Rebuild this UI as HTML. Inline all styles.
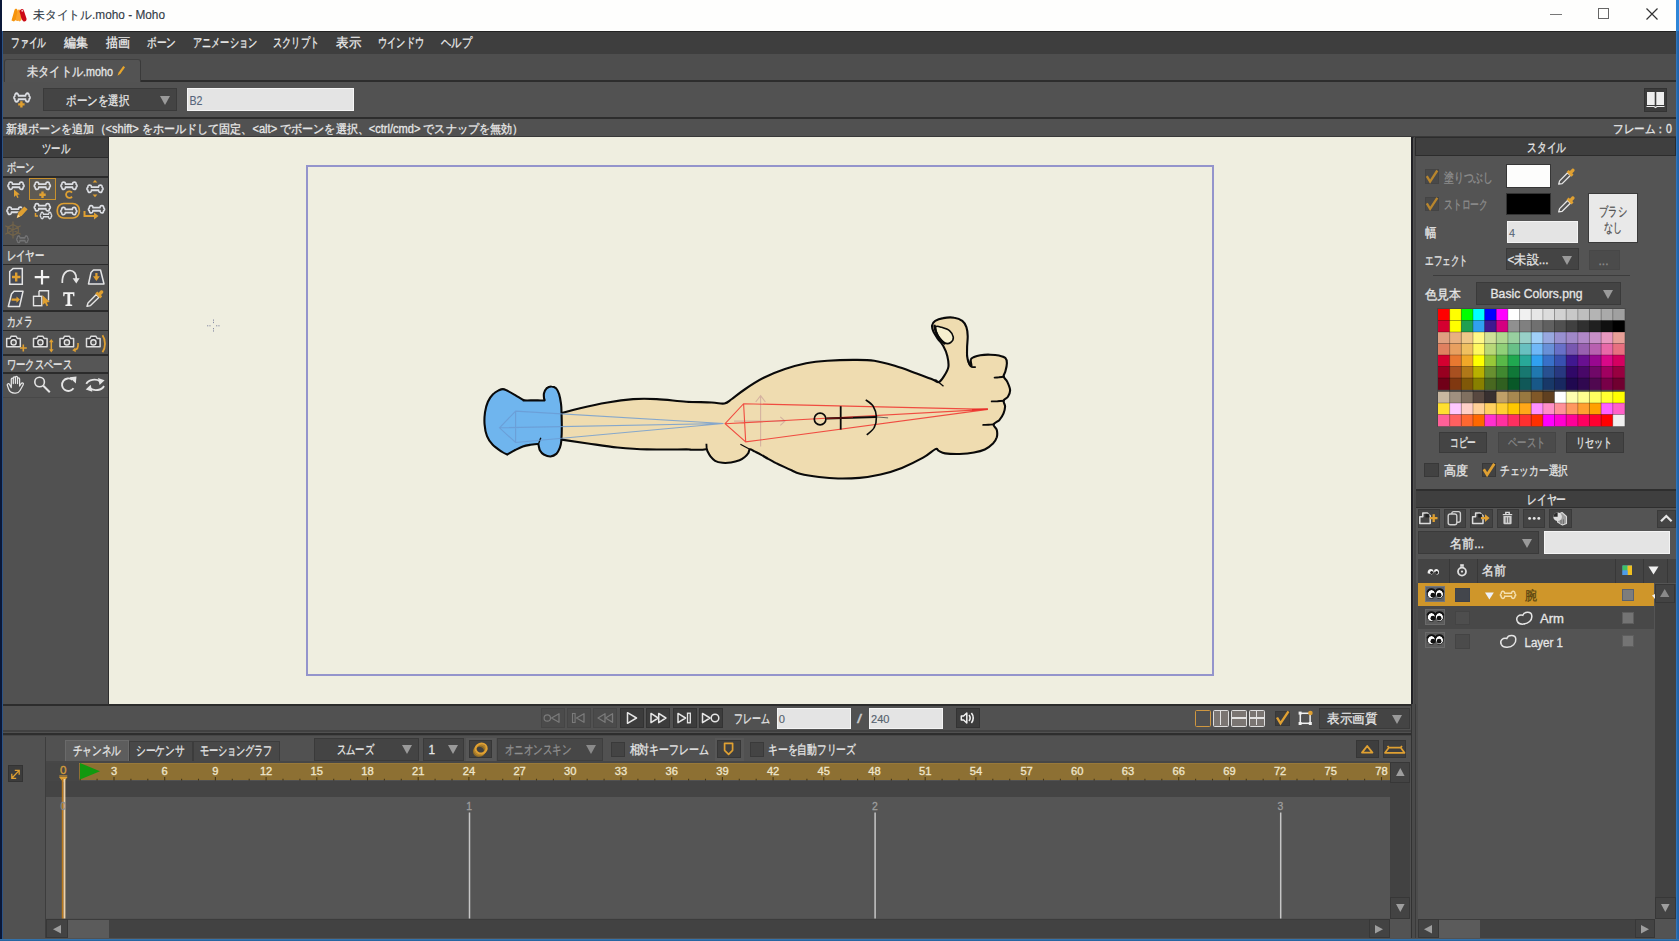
<!DOCTYPE html>
<html lang="ja">
<head>
<meta charset="utf-8">
<title>未タイトル.moho - Moho</title>
<style>
*{box-sizing:border-box;margin:0;padding:0}
html,body{width:1679px;height:941px;overflow:hidden;background:#515151}
body{font-family:"Liberation Sans",sans-serif;font-size:12px;color:#e4e4e4;position:relative}
.a{position:absolute;overflow:hidden}
svg{position:absolute;overflow:visible}
#txt{left:0;top:0;font-family:"Liberation Sans",sans-serif;pointer-events:none}
</style>
</head>
<body>
<svg width="0" height="0" style="position:absolute"><defs>
<g id="bone"><path transform="translate(0.9,0) scale(0.9,1.04)" d="M5,3 L13,3 C12.6,0.2 17.6,0.4 16.9,3.3 C18.4,4 18.4,5.5 16.9,5.8 C17.6,8.7 12.6,8.8 13,6 L5,6 C5.4,8.8 0.4,8.7 1.1,5.8 C-0.4,5.5 -0.4,4 1.1,3.3 C0.4,0.4 5.4,0.2 5,3 Z" fill="none" stroke="#dcdee3" stroke-width="1.75" stroke-linejoin="round"/></g>
</defs></svg>
<div class="a" style="left:0px;top:0px;width:1679px;height:31px;background:#fefefd;"></div>
<svg style="left:10.9px;top:6.6px" width="16" height="16" viewBox="0 0 16 16"><path d="M0.5,13.5 L3.5,3 C4,1.2 6,1.2 6.5,3 L8,9 L7,14 L4.5,13 L3,14.5 Z" fill="#f6940c"/>
<path d="M4.5,13.5 L6.5,4 C7,2 9,2 9.3,4 L10.5,13 L8.5,14.5 L7,13.5 Z" fill="#fba22a"/>
<path d="M8.5,4.5 C9,1.5 12.5,1 13,4 L15.5,11.5 C16,14 13.5,15.5 12,14 L10.5,12 Z" fill="#cc0a16"/>
<circle cx="11.3" cy="3.8" r="1" fill="#f4c0c0"/></svg>
<div class="a" style="left:1550px;top:13.6px;width:12px;height:1.3px;background:#777;"></div>
<div class="a" style="left:1598px;top:8px;width:11px;height:11px;border:1px solid #666;"></div>
<svg style="left:1646px;top:8px" width="12" height="12" viewBox="0 0 12 12"><path d="M0.5,0.5 L11.5,11.5 M11.5,0.5 L0.5,11.5" stroke="#333" stroke-width="1.2" fill="none"/></svg>
<div class="a" style="left:0px;top:31px;width:1679px;height:1px;background:#222;"></div>
<div class="a" style="left:0px;top:32px;width:1679px;height:21.5px;background:#3e3e3e;"></div>
<div class="a" style="left:0px;top:53.5px;width:1679px;height:0.9px;background:#393939;"></div>
<div class="a" style="left:0px;top:54.4px;width:1679px;height:26.6px;background:#4e4e4e;"></div>
<div class="a" style="left:141px;top:80px;width:1538px;height:2px;background:#2d2d2d;"></div>
<div class="a" style="left:4px;top:59.3px;width:137px;height:22.7px;background:#535353;border:1px solid #3a3a3a;border-top-color:#404040;border-bottom:none;border-radius:3px 3px 0 0;"></div>
<svg style="left:116px;top:65px" width="10" height="12" viewBox="0 0 10 12"><path d="M1.5,10.8 L2.6,7.4 L7.3,1 L9,2.2 L4.5,8.8 Z" fill="#e8a62c"/></svg>
<div class="a" style="left:0px;top:82px;width:1679px;height:36px;background:#525252;"></div>
<svg style="left:12px;top:90px" width="22" height="20" viewBox="0 0 22 20"><g transform="translate(1,2.2) scale(1,1.14)"><use href="#bone"/></g><path transform="translate(0,-0.3)" d="M8.2,11.5 h2.4 v2 h2 v2.4 h-2 v2 h-2.4 v-2 h-2 v-2.4 h2 z" fill="#e0a030"/></svg>
<div class="a" style="left:43px;top:88px;width:134px;height:23px;background:#444;border:1px solid #3a3a3a;"></div>
<svg style="left:160px;top:96px" width="10" height="9" viewBox="0 0 10 9"><path d="M0,0 L10,0 L5.0,9 Z" fill="#9a9a9a"/></svg>
<div class="a" style="left:187px;top:88px;width:167px;height:23px;background:#e4e4e4;border:1px solid #f6f6f6;"></div>
<div class="a" style="left:1644px;top:88px;width:23px;height:24px;background:#3c3c3c;border:1px solid #333;"></div>
<svg style="left:1646px;top:91px" width="19" height="18" viewBox="0 0 19 18"><path d="M1,1 L8.7,1 L8.7,14 L1,14 Z M10.3,1 L18,1 L18,14 L10.3,14 Z" fill="#eee"/>
<path d="M0.5,15.5 L8,15.5 L9.5,16.5 L11,15.5 L18.5,15.5" stroke="#eee" stroke-width="1.2" fill="none"/></svg>
<div class="a" style="left:0px;top:117px;width:1679px;height:2px;background:#2d2d2d;"></div>
<div class="a" style="left:0px;top:119px;width:1679px;height:18px;background:#515151;"></div>
<div class="a" style="left:0px;top:136px;width:1679px;height:1.6px;background:#383838;"></div>
<div class="a" style="left:0px;top:138px;width:110px;height:566px;background:#515151;"></div>
<div class="a" style="left:3px;top:138px;width:106px;height:18.5px;background:#3f3f3f;"></div>
<div class="a" style="left:3px;top:156.5px;width:106px;height:1.5px;background:#2b2b2b;"></div>
<div class="a" style="left:3px;top:158px;width:106px;height:18px;background:#565656;"></div>
<div class="a" style="left:3px;top:176px;width:106px;height:1.6px;background:#2b2b2b;"></div>
<div class="a" style="left:29px;top:178px;width:27px;height:22px;background:#5e5a52;border:1.5px solid #c8912e;"></div>
<svg style="left:0px;top:0px" width="110" height="250" viewBox="0 0 110 250"><use href="#bone" x="7" y="181"/><path d="M14,189.5 L14,197 L16,195.3 L17.3,198 L18.6,197.4 L17.3,194.8 L19.8,194.6 Z" fill="#dfa032"/><use href="#bone" x="33.3" y="181"/><path d="M41.3,191.5 h2.4 v2 h2 v2.4 h-2 v2 h-2.4 v-2 h-2 v-2.4 h2 z" fill="#dfa032"/><use href="#bone" x="60" y="181"/><path d="M72,192.6 A3.3,3.3 0 1 0 72,196.6" fill="none" stroke="#dfa032" stroke-width="1.8"/><use href="#bone" x="86" y="184"/><path d="M92.6,182.6 L95,180 L97.4,182.6 Z M92.6,194.6 L95,197.2 L97.4,194.6 Z" fill="#dfa032"/><use href="#bone" x="6" y="206"/><path d="M16.6,218.2 L18.4,212.6 L24.3,206.4 L27.6,209.3 L21.8,215.8 Z" fill="#dfa032" stroke="#515151" stroke-width="1.2" paint-order="stroke"/><path d="M16.9,217.8 L18,214.6 L20,216.6 Z" fill="#f6d9a0"/><use href="#bone" x="33.3" y="202.5"/><g transform="translate(39.5,211.5) scale(0.72,0.85)"><use href="#bone"/></g><path d="M35.5,213 L35.5,216 L38,216" stroke="#dfa032" stroke-width="1.5" fill="none"/><rect x="57.3" y="203.5" width="22" height="14.5" rx="6.5" fill="none" stroke="#dfa032" stroke-width="1.7"/><use href="#bone" x="59.8" y="206.3"/><use href="#bone" x="87.5" y="204.5"/><path d="M84.5,211 L84.5,216 L95,216" stroke="#dfa032" stroke-width="2" fill="none"/><path d="M94,212.6 L98.5,216 L94,219.4 Z" fill="#dfa032"/><g opacity="0.24"><path d="M13,221.5 L13,238.5 M5.3,225.8 L20.7,234.2 M5.3,234.2 L20.7,225.8 M13,224.5 L18.3,227.3 L18.3,232.7 L13,235.5 L7.7,232.7 L7.7,227.3 Z" stroke="#dfa032" stroke-width="1.2" fill="none"/><g transform="translate(16,235) scale(0.72,0.9)"><use href="#bone"/></g></g></svg>
<div class="a" style="left:3px;top:244.5px;width:106px;height:1.6px;background:#2b2b2b;"></div>
<div class="a" style="left:3px;top:246px;width:106px;height:17.5px;background:#565656;"></div>
<div class="a" style="left:3px;top:263.5px;width:106px;height:1.6px;background:#2b2b2b;"></div>
<svg style="left:0px;top:0px" width="110" height="312" viewBox="0 0 110 312"><path d="M9.7,284.3 L9.7,271.5 L13,268.6 L22.3,268.6 L22.3,284.3 Z" fill="#464a54" stroke="#e4e4e4" stroke-width="1.5"/><path d="M15,272.5 h2.4 v3.3 h3 v2.4 h-3 v3.3 h-2.4 v-3.3 h-3 v-2.4 h3 z" fill="#dfa032"/><path d="M42,270 L42,284.5 M34.7,277.2 L49.3,277.2" stroke="#f4f4f4" stroke-width="2.2"/><path d="M62.3,283 C62,274 66,270.5 70,270.5 C74,270.5 76.5,274 76.3,279" fill="none" stroke="#e4e4e4" stroke-width="1.7"/><path d="M72.6,278.3 L79.6,278.3 L76.3,283.6 Z" fill="#e4e4e4"/><path d="M88.5,284 L91,272.5 L93.5,270 L100.5,270 L104,284 Z" fill="#464a54" stroke="#e4e4e4" stroke-width="1.5" stroke-linejoin="round"/><path d="M95.3,273 h2.2 v3.2 h2.3 L96.4,281 L93,276.2 h2.3 z" fill="#dfa032"/><path d="M8.3,306.5 L11.5,294 L14,291.3 L23,291.3 L19.5,306.5 Z" fill="#464a54" stroke="#e4e4e4" stroke-width="1.5" stroke-linejoin="round"/><path d="M11.5,298.5 h5 v-2 L20,299.6 L16.5,302.8 v-2 h-5 z" fill="#dfa032"/><path d="M39,290.8 L48.5,290.8 L48.5,300.5 M39,290.8 L39,296" fill="none" stroke="#e4e4e4" stroke-width="1.4"/><rect x="33.5" y="296.3" width="8.3" height="9.4" fill="none" stroke="#e4e4e4" stroke-width="1.4"/><path d="M42.6,295.3 L42.6,305 L45,303 L46.6,306.3 L48.2,305.5 L46.7,302.4 L49.8,302 Z" fill="#dfa032"/><path d="M63.2,292.3 L74.4,292.3 L74.4,296.2 L73.3,296.2 L72.8,293.9 L70.2,293.9 L70.2,304.3 L72.2,304.8 L72.2,306 L65.4,306 L65.4,304.8 L67.4,304.3 L67.4,293.9 L64.8,293.9 L64.3,296.2 L63.2,296.2 Z" fill="#f2f2f2"/><path d="M87,306.3 L88,303 L96.3,294.5 L99,297.2 L90.5,305.6 Z" fill="none" stroke="#e4e4e4" stroke-width="1.4" stroke-linejoin="round"/><path d="M95.3,293.6 L97.3,291.6 L98.6,292.8 L100.6,290.6 C102,289.3 104.3,291.4 103,293 L101,295 L102.2,296.4 L100.2,298.4 Z" fill="#dfa032"/></svg>
<div class="a" style="left:3px;top:310px;width:106px;height:1.6px;background:#2b2b2b;"></div>
<div class="a" style="left:3px;top:311.6px;width:106px;height:18px;background:#565656;"></div>
<div class="a" style="left:3px;top:329.5px;width:106px;height:1.6px;background:#2b2b2b;"></div>
<svg style="left:0px;top:0px" width="110" height="356" viewBox="0 0 110 356"><g transform="translate(6,335.4)"><path d="M0.7,3 L4,3 L5.3,0.8 L10,0.8 L11.3,3 L14.3,3 L14.3,11.3 L0.7,11.3 Z" fill="#3a3a3c" stroke="#dedede" stroke-width="1.5" stroke-linejoin="round"/><circle cx="7.6" cy="7" r="2.6" fill="#555" stroke="#e4e4e4" stroke-width="1.4"/></g><path d="M23.3,344.6 L23.3,351.4 M20,348 L26.8,348" stroke="#dfa032" stroke-width="1.6"/><g transform="translate(32.8,335.4)"><path d="M0.7,3 L4,3 L5.3,0.8 L10,0.8 L11.3,3 L14.3,3 L14.3,11.3 L0.7,11.3 Z" fill="#3a3a3c" stroke="#dedede" stroke-width="1.5" stroke-linejoin="round"/><circle cx="7.6" cy="7" r="2.6" fill="#555" stroke="#e4e4e4" stroke-width="1.4"/></g><path d="M51.3,341 L51.3,350.5" stroke="#dfa032" stroke-width="1.5"/><path d="M49,342.3 L51.3,339 L53.6,342.3 Z M49,349.3 L51.3,352.6 L53.6,349.3 Z" fill="#dfa032"/><g transform="translate(59.3,335.4)"><path d="M0.7,3 L4,3 L5.3,0.8 L10,0.8 L11.3,3 L14.3,3 L14.3,11.3 L0.7,11.3 Z" fill="#3a3a3c" stroke="#dedede" stroke-width="1.5" stroke-linejoin="round"/><circle cx="7.6" cy="7" r="2.6" fill="#555" stroke="#e4e4e4" stroke-width="1.4"/></g><path d="M78,343 C78.6,347.5 77,349.6 74.5,350" fill="none" stroke="#dfa032" stroke-width="1.6"/><path d="M75.3,347.4 L72.3,350.3 L75.8,352.3 Z" fill="#dfa032"/><g transform="translate(85.8,335.4)"><path d="M0.7,3 L4,3 L5.3,0.8 L10,0.8 L11.3,3 L14.3,3 L14.3,11.3 L0.7,11.3 Z" fill="#3a3a3c" stroke="#dedede" stroke-width="1.5" stroke-linejoin="round"/><circle cx="7.6" cy="7" r="2.6" fill="#555" stroke="#e4e4e4" stroke-width="1.4"/></g><path d="M102.5,335.3 C105.8,340 105.8,347.5 102.5,352.3" fill="none" stroke="#dfa032" stroke-width="1.8"/></svg>
<div class="a" style="left:3px;top:354px;width:106px;height:1.7px;background:#2b2b2b;"></div>
<div class="a" style="left:3px;top:355.7px;width:106px;height:16.6px;background:#565656;"></div>
<div class="a" style="left:3px;top:372.3px;width:106px;height:1.7px;background:#2b2b2b;"></div>
<svg style="left:0px;top:-0.7px" width="110" height="400" viewBox="0 0 110 400"><path d="M11.3,386 L11.3,380.3 C11.3,378.8 13.3,378.8 13.3,380.3 L13.3,384.5 L13.3,379 C13.3,377.5 15.4,377.5 15.4,379 L15.4,384.3 L15.4,378.6 C15.4,377.1 17.5,377.1 17.5,378.6 L17.5,384.5 L17.5,380 C17.5,378.5 19.6,378.5 19.6,380 L19.6,387 L21.3,384.5 C22.3,383.3 24,384.3 23.2,385.7 L20,391.5 C19,393.3 17.6,394 15.8,394 L14.3,394 C11.6,394 9.4,392.3 8.6,390 L7.3,386.3 C6.8,384.8 8.8,384 9.5,385.4 L11.3,388.6 Z" fill="none" stroke="#e4e4e4" stroke-width="1.25" stroke-linejoin="round"/><circle cx="39.6" cy="383" r="4.8" fill="none" stroke="#e4e4e4" stroke-width="1.6"/><path d="M43.3,386.8 L49.8,393.3" stroke="#e4e4e4" stroke-width="2"/><path d="M73.5,389.3 A6.3,6.3 0 1 1 72.3,380.8" fill="none" stroke="#e4e4e4" stroke-width="1.9"/><path d="M69.5,378.3 L76.5,377.5 L75.8,384.5 Z" fill="#e4e4e4"/><path d="M86.3,384.8 C88.5,380.3 96,379.5 100,382.3" fill="none" stroke="#e4e4e4" stroke-width="1.8"/><path d="M98,379 L104.6,381.3 L99.6,386 Z" fill="#e4e4e4"/><path d="M104,387 C101.8,391.5 94.3,392.3 90.3,389.5" fill="none" stroke="#e4e4e4" stroke-width="1.8"/><path d="M92.3,392.8 L85.7,390.5 L90.7,385.8 Z" fill="#e4e4e4"/></svg>
<div class="a" style="left:3px;top:397px;width:106px;height:1px;background:#484848;"></div>
<div class="a" style="left:107.8px;top:137px;width:2px;height:567px;background:#2e2e2e;"></div>
<div class="a" style="left:109.2px;top:137px;width:1301.6px;height:567px;background:#efeee0;"></div>
<div class="a" style="left:306.3px;top:165px;width:907.3px;height:510.7px;border:2.8px solid #9494cc;"></div>
<svg style="left:0px;top:0px" width="1679" height="941" viewBox="0 0 1679 941"><path d="M544.7,417.6 C548.8,413.8 555.7,414.6 561.6,413.1 C567.5,411.5 572.4,409.9 580.1,408.2 C587.7,406.4 598.7,404.0 607.6,402.5 C616.4,400.9 624.9,399.7 633.1,399.1 C641.3,398.6 647.9,398.7 656.7,399.1 C665.6,399.5 677.0,401.1 686.2,401.7 C695.4,402.2 705.4,402.1 711.7,402.5 C718.1,402.8 721.1,404.1 724.4,403.5 C727.8,402.9 728.5,401.4 731.9,399.0 C735.2,396.7 739.3,393.0 744.6,389.5 C749.9,385.9 757.0,381.2 763.7,377.8 C770.5,374.4 777.9,371.5 785.0,369.1 C792.1,366.7 799.2,364.7 806.2,363.3 C813.3,361.9 819.7,361.3 827.5,360.8 C835.3,360.2 845.2,359.9 853.0,359.9 C860.8,359.9 867.2,359.7 874.2,360.8 C881.3,361.8 888.4,364.0 895.5,366.1 C902.6,368.2 910.5,371.3 916.7,373.5 C922.9,375.8 929.0,378.0 932.7,379.5 C936.4,380.9 936.9,382.7 938.8,382.1 C940.7,381.5 942.6,378.4 944.2,375.8 C945.8,373.3 947.9,370.1 948.4,366.8 C948.9,363.5 948.1,359.4 947.3,356.0 C946.5,352.5 944.9,348.9 943.3,346.0 C941.8,343.2 939.6,341.2 937.9,338.8 C936.3,336.4 934.4,333.8 933.4,331.6 C932.4,329.3 931.8,327.1 932.1,325.3 C932.4,323.5 933.3,322.0 935.2,320.8 C937.1,319.6 940.2,318.6 943.3,318.1 C946.5,317.5 951.0,317.2 954.2,317.7 C957.3,318.1 960.2,319.2 962.3,320.8 C964.3,322.3 965.5,324.5 966.4,327.1 C967.3,329.6 967.6,332.8 967.7,336.1 C967.8,339.4 967.2,343.6 967.1,346.9 C967.1,350.2 966.9,353.4 967.1,356.0 C967.4,358.5 967.9,360.6 968.6,362.3 C969.3,364.0 971.1,366.5 971.5,366.1 C971.8,365.6 970.3,361.1 970.8,359.6 C971.2,358.1 972.4,357.8 974.0,357.0 C975.6,356.3 977.6,355.6 980.3,355.2 C983.0,354.8 987.2,354.6 990.3,354.7 C993.4,354.8 996.4,355.0 998.9,355.6 C1001.4,356.2 1004.1,356.9 1005.4,358.1 C1006.7,359.4 1006.9,361.0 1006.9,363.2 C1006.9,365.4 1006.0,369.1 1005.4,371.3 C1004.9,373.5 1003.3,374.8 1003.6,376.5 C1003.9,378.2 1006.1,379.3 1007.2,381.6 C1008.3,383.9 1010.0,387.7 1010.1,390.3 C1010.2,392.8 1009.0,395.0 1007.9,396.8 C1006.9,398.5 1004.1,399.1 1003.6,400.7 C1003.1,402.3 1005.1,404.3 1005.1,406.5 C1005.0,408.7 1004.4,411.5 1003.4,413.7 C1002.5,415.9 1001.1,418.1 999.5,419.9 C997.8,421.6 994.0,422.7 993.5,424.4 C993.1,426.1 996.2,427.8 996.8,430.0 C997.3,432.1 997.4,434.9 996.8,437.2 C996.1,439.4 994.9,441.5 993.0,443.5 C991.0,445.5 988.0,448.0 984.8,449.5 C981.7,451.0 978.2,451.8 974.0,452.5 C969.8,453.3 964.4,453.8 959.6,454.0 C954.8,454.1 948.6,453.9 945.1,453.4 C941.7,452.9 940.4,451.6 938.8,450.9 C937.2,450.2 938.0,448.0 935.4,449.1 C932.8,450.2 928.7,454.5 923.1,457.7 C917.5,460.8 909.0,465.1 901.9,467.9 C894.8,470.7 887.7,472.8 880.6,474.5 C873.5,476.1 866.5,477.2 859.4,477.9 C852.3,478.5 844.9,478.6 838.1,478.5 C831.4,478.4 825.4,477.8 819.0,477.0 C812.6,476.2 804.5,474.8 800.0,473.7 C795.4,472.6 794.2,471.5 791.6,470.3 C788.9,469.2 786.8,468.2 784.1,466.9 C781.5,465.7 778.3,464.2 775.6,462.9 C773.0,461.5 770.7,460.2 768.2,458.9 C765.7,457.5 763.1,455.8 760.8,454.6 C758.5,453.4 756.2,452.3 754.4,451.4 C752.6,450.5 751.0,449.0 749.9,449.3 C748.9,449.6 749.1,452.0 748.2,453.3 C747.4,454.6 746.3,455.9 744.8,457.0 C743.4,458.2 741.8,459.4 739.5,460.3 C737.2,461.2 733.8,462.1 731.0,462.5 C728.2,462.9 725.2,463.1 722.5,462.8 C719.9,462.5 717.1,461.9 715.1,460.8 C713.0,459.6 711.6,457.7 710.3,456.1 C709.0,454.5 708.0,452.1 707.4,451.0 C706.8,449.9 707.6,449.5 706.6,449.3 C705.5,449.1 703.9,449.6 701.3,449.7 C698.6,449.8 693.1,449.8 690.6,449.7 C688.1,449.7 693.5,449.5 686.2,449.4 C678.9,449.4 658.4,449.8 646.9,449.4 C635.4,449.1 627.2,448.4 617.4,447.5 C607.6,446.5 597.2,444.8 587.9,443.5 C578.6,442.2 570.1,440.9 561.6,439.6 C553.1,438.3 539.6,439.5 536.8,435.9 C534.0,432.2 540.6,421.4 544.7,417.6 Z" fill="#efdcb0" stroke="#0a0a0a" stroke-width="2.1" stroke-linejoin="round"/><path d="M561.5,412.3 C561.4,408.5 561.4,406.7 561.0,403.7 C560.6,400.7 559.9,396.6 559.1,394.1 C558.3,391.6 557.5,389.9 556.3,388.6 C555.0,387.3 553.1,386.5 551.5,386.5 C549.9,386.4 547.8,387.3 546.5,388.4 C545.3,389.5 544.4,391.6 544.0,393.2 C543.6,394.8 543.9,396.8 544.0,397.9 C544.1,399.1 544.7,399.6 544.6,400.0 C544.5,400.5 545.1,400.4 543.4,400.4 C541.6,400.5 537.5,400.4 534.3,400.4 C531.1,400.4 526.1,400.5 524.2,400.4 C522.4,400.4 524.8,400.9 523.3,400.0 C521.8,399.2 517.9,396.7 515.2,395.1 C512.4,393.5 508.6,391.3 506.5,390.3 C504.5,389.3 504.2,389.1 502.9,389.1 C501.6,389.1 500.5,389.5 498.9,390.3 C497.3,391.1 495.0,392.2 493.2,394.1 C491.3,396.0 489.3,398.7 487.9,401.8 C486.6,404.8 485.6,408.5 485.0,412.3 C484.5,416.1 484.2,420.7 484.6,424.7 C484.9,428.7 485.6,432.8 487.0,436.2 C488.3,439.5 490.1,442.2 492.7,444.8 C495.2,447.4 499.9,450.4 502.2,452.0 C504.6,453.6 506.1,454.0 507.0,454.3 C508.0,454.7 506.6,454.7 508.0,454.0 C509.3,453.3 512.7,451.3 515.2,450.0 C517.6,448.8 520.3,447.4 522.8,446.5 C525.4,445.6 528.0,445.2 530.4,444.8 C532.9,444.4 536.3,443.9 537.6,444.0 C539.0,444.1 538.2,444.2 538.6,445.3 C539.0,446.4 539.1,449.0 540.0,450.5 C540.9,452.1 542.1,453.6 543.8,454.5 C545.6,455.5 548.5,456.6 550.5,456.5 C552.6,456.3 554.7,455.3 556.3,453.9 C557.8,452.4 559.1,449.8 559.9,447.7 C560.7,445.5 561.0,444.5 561.3,441.0 C561.6,437.5 561.8,431.4 561.8,426.6 C561.8,421.8 561.6,416.1 561.5,412.3 Z" fill="#6fb5ee" stroke="#0a0a0a" stroke-width="2.1" stroke-linejoin="round"/><path d="M935.9,326.6 C936.7,325.8 938.9,326.5 941.2,327.2 C943.5,327.9 947.7,329.1 949.7,330.8 C951.7,332.5 953.1,335.2 953.3,337.2 C953.5,339.1 952.2,341.5 950.7,342.5 C949.3,343.5 946.6,343.8 944.8,343.1 C943.0,342.4 941.1,340.1 939.7,338.2 C938.3,336.4 936.9,333.8 936.3,331.9 C935.7,329.9 935.1,327.3 935.9,326.6 Z" fill="#f6f0cf" stroke="#0a0a0a" stroke-width="1.6"/><path d="M934.6,325.9 C934.8,326.9 935.1,329.8 935.9,331.9 C936.6,333.9 937.9,336.3 939.3,338.2 C940.7,340.2 943.5,342.5 944.4,343.3" fill="none" stroke="#0a0a0a" stroke-width="2.6" stroke-linecap="round"/><path d="M935.4,379.5 L943.5,386.3" stroke="#0a0a0a" stroke-width="1.3"/><path d="M740.4,444.2 L749.7,449.3" stroke="#0a0a0a" stroke-width="1.3"/><path d="M540.8,437.8 L538.5,444.0" stroke="#0a0a0a" stroke-width="1.3"/><path d="M1004.0,376.5 C1003.1,376.7 1000.5,377.1 998.9,377.3 C997.4,377.4 995.3,377.6 994.6,377.6" fill="none" stroke="#0a0a0a" stroke-width="1.9" stroke-linecap="round"/><path d="M1004.0,400.7 C1002.9,400.8 999.5,401.1 997.5,401.3 C995.4,401.4 992.7,401.4 991.7,401.4" fill="none" stroke="#0a0a0a" stroke-width="1.9" stroke-linecap="round"/><path d="M993.9,424.4 C993.0,424.4 990.2,424.6 988.4,424.7 C986.7,424.8 984.1,424.9 983.2,424.9" fill="none" stroke="#0a0a0a" stroke-width="1.9" stroke-linecap="round"/><path d="M968.2,360.5 C968.5,361.2 969.1,363.9 969.7,365.0 C970.3,366.0 970.9,366.4 971.8,366.8 C972.7,367.1 974.5,367.1 975.1,367.1" fill="none" stroke="#0a0a0a" stroke-width="1.9" stroke-linecap="round"/><path d="M706.4,443.8 L706.7,449.3" stroke="#0a0a0a" stroke-width="1.8"/><path d="M499.5,427.8 L515.6,411.1 L723.5,423.5 L515.6,442.5 Z M515.6,411.1 L515.6,442.5 M499.5,427.8 L723.5,423.5" fill="none" stroke="#6a9ad2" stroke-width="1.1" opacity="0.8"/><path d="M760.6,446.6 L760.6,395.6 M755.7,402.0 L760.6,395.6 L765.4,402.0 M734.0,421.1 L785.0,421.1 M780.3,416.9 L785.0,421.1 L780.3,425.4" fill="none" stroke="#d0a79c" stroke-width="1.1" opacity="0.8"/><path d="M725.1,423.7 L743.6,403.7 L987.9,409.4 L745.7,441.9 Z M743.6,403.7 L745.7,441.9 M725.1,423.7 L987.9,409.4" fill="none" stroke="#f03c34" stroke-width="1.1" opacity="0.9"/><path d="M972.0,409.9 L987.9,409.0" stroke="#e8302a" stroke-width="1.6"/><circle cx="820.1" cy="419.0" r="5.8" fill="none" stroke="#0a0a0a" stroke-width="1.7"/><path d="M826.4,418.6 L876.4,416.9" stroke="#0a0a0a" stroke-width="2"/><path d="M876.4,416.9 L888.1,417.9" stroke="#444" stroke-width="0.8"/><path d="M840.7,406.2 L840.7,429.6" stroke="#0a0a0a" stroke-width="1.8"/><path d="M865.7,399.9 C867.0,400.9 871.4,403.4 873.2,406.2 C875.0,409.1 876.2,413.3 876.4,416.9 C876.5,420.4 875.8,424.5 874.2,427.5 C872.7,430.5 868.0,433.7 866.8,434.9" fill="none" stroke="#0a0a0a" stroke-width="1.6"/><path d="M826.4,418.6 L853.0,417.5" stroke="#d01818" stroke-width="0.8" opacity="0.7"/><path d="M213.5,319.5 v4 M213.5,328 v4 M207,325.8 h4 M216,325.8 h4" stroke="#8a8fa6" stroke-width="1" stroke-dasharray="1.3 1"/></svg>
<div class="a" style="left:0px;top:703.5px;width:1411px;height:2.2px;background:#2c2c2c;"></div>
<div class="a" style="left:0px;top:705.7px;width:1411px;height:27px;background:#515151;"></div>
<div class="a" style="left:0px;top:730.3px;width:1411px;height:2.2px;background:#414141;"></div>
<div class="a" style="left:0px;top:732.5px;width:1411px;height:2.7px;background:#2e2e2e;"></div>
<div class="a" style="left:0px;top:735.2px;width:1411px;height:1.3px;background:#464646;"></div>
<div class="a" style="left:540.5px;top:708px;width:24px;height:20px;background:#4b4b4b;border:1px solid #454545;"></div>
<div class="a" style="left:567px;top:708px;width:24px;height:20px;background:#4b4b4b;border:1px solid #454545;"></div>
<div class="a" style="left:593.4px;top:708px;width:24px;height:20px;background:#4b4b4b;border:1px solid #454545;"></div>
<div class="a" style="left:619.8px;top:708px;width:24px;height:20px;background:#3c3c3c;border:1px solid #333;"></div>
<div class="a" style="left:646.2px;top:708px;width:24px;height:20px;background:#3c3c3c;border:1px solid #333;"></div>
<div class="a" style="left:672.6px;top:708px;width:24px;height:20px;background:#3c3c3c;border:1px solid #333;"></div>
<div class="a" style="left:699px;top:708px;width:24px;height:20px;background:#3c3c3c;border:1px solid #333;"></div>
<div class="a" style="left:955.5px;top:708px;width:24px;height:20px;background:#3c3c3c;border:1px solid #333;"></div>
<div class="a" style="left:777px;top:708px;width:74px;height:21px;background:#e4e4e4;border:1px solid #f4f4f4;"></div>
<div class="a" style="left:869px;top:708px;width:74px;height:21px;background:#e4e4e4;border:1px solid #f4f4f4;"></div>
<div class="a" style="left:1194.5px;top:709.5px;width:16.5px;height:17px;background:#4f4f50;border:1.8px solid #cf9740;border-radius:1.5px;"></div>
<div class="a" style="left:1212.5px;top:709.5px;width:16.5px;height:17px;background:#7a7572;border:1.7px solid #dedede;border-radius:1.5px;"></div>
<div class="a" style="left:1220px;top:711px;width:1.4px;height:14px;background:#e2e2e2;"></div>
<div class="a" style="left:1230.5px;top:709.5px;width:16.5px;height:17px;background:#7a7572;border:1.7px solid #dedede;border-radius:1.5px;"></div>
<div class="a" style="left:1232px;top:717.3px;width:14px;height:1.4px;background:#e2e2e2;"></div>
<div class="a" style="left:1248.5px;top:709.5px;width:16.5px;height:17px;background:#7a7572;border:1.7px solid #dedede;border-radius:1.5px;"></div>
<div class="a" style="left:1256px;top:711px;width:1.4px;height:14px;background:#e2e2e2;"></div>
<div class="a" style="left:1250px;top:717.3px;width:14px;height:1.4px;background:#e2e2e2;"></div>
<div class="a" style="left:1275px;top:710.5px;width:15px;height:15px;background:#3e3e3e;border:1px solid #383838;"></div>
<svg style="left:0px;top:0px" width="1411" height="740" viewBox="0 0 1411 740"><circle cx="547.3" cy="718" r="3.2" fill="none" stroke="#7a7a7a" stroke-width="1.2"/><path d="M559.0,713.7 L551.5,718.0 L559.0,722.3000000000001 Z" fill="none" stroke="#7a7a7a" stroke-width="1.3" stroke-linejoin="round"/><rect x="572.5" y="713.5" width="2.6" height="9" fill="none" stroke="#7a7a7a" stroke-width="1.1"/><path d="M584.0,713.7 L576.5,718.0 L584.0,722.3000000000001 Z" fill="none" stroke="#7a7a7a" stroke-width="1.3" stroke-linejoin="round"/><path d="M605,713.7 L598,718.0 L605,722.3000000000001 Z" fill="none" stroke="#7a7a7a" stroke-width="1.3" stroke-linejoin="round"/><path d="M612.5,713.7 L605.5,718.0 L612.5,722.3000000000001 Z" fill="none" stroke="#7a7a7a" stroke-width="1.3" stroke-linejoin="round"/><path d="M627.5,712.7 L636.5,718.0 L627.5,723.3000000000001 Z" fill="none" stroke="#e6e6e6" stroke-width="1.5" stroke-linejoin="round"/><path d="M651,713.4 L658.2,718.0 L651,722.6 Z" fill="none" stroke="#e6e6e6" stroke-width="1.5" stroke-linejoin="round"/><path d="M658.7,713.4 L665.9000000000001,718.0 L658.7,722.6 Z" fill="none" stroke="#e6e6e6" stroke-width="1.5" stroke-linejoin="round"/><path d="M678,713.4 L685.5,718.0 L678,722.6 Z" fill="none" stroke="#e6e6e6" stroke-width="1.5" stroke-linejoin="round"/><rect x="687.5" y="713.2" width="2.8" height="9.6" fill="none" stroke="#e6e6e6" stroke-width="1.3"/><path d="M702.5,713.4 L710.0,718.0 L702.5,722.6 Z" fill="none" stroke="#e6e6e6" stroke-width="1.5" stroke-linejoin="round"/><circle cx="715" cy="718" r="3.8" fill="none" stroke="#e6e6e6" stroke-width="1.5"/><path d="M961.3,716 L963.6,716 L966.8,713 L966.8,723 L963.6,720 L961.3,720 Z" fill="none" stroke="#f0f0f0" stroke-width="1.5" stroke-linejoin="round"/><path d="M969,715 C970.4,716.8 970.4,719.2 969,721 M971.4,713 C973.8,715.8 973.8,720.2 971.4,723" fill="none" stroke="#f0f0f0" stroke-width="1.6"/><path d="M1277,717.5 L1280.5,723.3 L1288.5,711.3" fill="none" stroke="#dfa032" stroke-width="2.4"/><rect x="1300.3" y="713.3" width="9.8" height="10" fill="none" stroke="#f0f0f0" stroke-width="1.5"/><rect x="1298.6" y="711.6" width="3" height="3" fill="#f0f0f0"/><rect x="1298.6" y="722" width="3" height="3" fill="#f0f0f0"/><rect x="1308.8" y="722" width="3" height="3" fill="#f0f0f0"/><circle cx="1310.4" cy="713" r="2.3" fill="#dfa032"/></svg>
<div class="a" style="left:1318.5px;top:708px;width:91px;height:21px;background:#444;border:1px solid #3a3a3a;"></div>
<svg style="left:1392px;top:715px" width="10" height="9" viewBox="0 0 10 9"><path d="M0,0 L10,0 L5.0,9 Z" fill="#9a9a9a"/></svg>
<div class="a" style="left:0px;top:735.5px;width:1411px;height:203px;background:#515151;"></div>
<div class="a" style="left:44.8px;top:736.5px;width:1.6px;height:201.5px;background:#3d3d3d;"></div>
<div class="a" style="left:65px;top:740px;width:64px;height:22px;background:#5d5d5d;border:1px solid #6a6a6a;border-bottom:none;"></div>
<div class="a" style="left:129px;top:741px;width:63.5px;height:21px;background:#484848;border:1px solid #3c3c3c;border-bottom:none;"></div>
<div class="a" style="left:192.5px;top:741px;width:87px;height:21px;background:#484848;border:1px solid #3c3c3c;border-bottom:none;"></div>
<div class="a" style="left:314px;top:738px;width:105px;height:22.5px;background:#444;border:1px solid #3a3a3a;"></div>
<svg style="left:402px;top:745px" width="10" height="9" viewBox="0 0 10 9"><path d="M0,0 L10,0 L5.0,9 Z" fill="#9a9a9a"/></svg>
<div class="a" style="left:423px;top:738px;width:41px;height:22.5px;background:#444;border:1px solid #3a3a3a;"></div>
<svg style="left:447.5px;top:745px" width="10" height="9" viewBox="0 0 10 9"><path d="M0,0 L10,0 L5.0,9 Z" fill="#9a9a9a"/></svg>
<div class="a" style="left:465.5px;top:737.5px;width:30px;height:23px;background:#575757;"></div>
<div class="a" style="left:468.8px;top:739.5px;width:23px;height:18.5px;background:#404040;border:1px solid #363636;"></div>
<svg style="left:468.5px;top:738px" width="24" height="23" viewBox="0 0 24 23"><g transform="rotate(-20 12 11)"><ellipse cx="9.6" cy="12.4" rx="5.6" ry="5" fill="none" stroke="#8f6c26" stroke-width="1.6"/><ellipse cx="10.8" cy="11.6" rx="5.6" ry="5" fill="none" stroke="#b5842c" stroke-width="1.6"/><ellipse cx="12.3" cy="10.6" rx="5.6" ry="5" fill="none" stroke="#dfa032" stroke-width="2"/></g></svg>
<div class="a" style="left:497px;top:738px;width:105.5px;height:22.5px;background:#474747;border:1px solid #3e3e3e;"></div>
<svg style="left:586px;top:745px" width="10" height="9" viewBox="0 0 10 9"><path d="M0,0 L10,0 L5.0,9 Z" fill="#8a8a8a"/></svg>
<div class="a" style="left:610.5px;top:742px;width:14.5px;height:14.5px;background:#444;border:1px solid #3a3a3a;"></div>
<div class="a" style="left:714.5px;top:737.5px;width:29px;height:23px;background:#575757;"></div>
<div class="a" style="left:717px;top:739.5px;width:23.5px;height:18.8px;background:#404040;border:1px solid #363636;"></div>
<svg style="left:717px;top:738px" width="24" height="23" viewBox="0 0 24 23"><path d="M7.6,5.3 L15.6,5.3 L15.6,12.3 L11.6,16.3 L7.6,12.3 Z" fill="none" stroke="#dfa032" stroke-width="1.7" stroke-linejoin="round"/></svg>
<div class="a" style="left:749.5px;top:742px;width:14.5px;height:14.5px;background:#444;border:1px solid #3a3a3a;"></div>
<div class="a" style="left:1356px;top:740px;width:22.5px;height:18px;background:#3e3e3e;border:1px solid #363636;"></div>
<div class="a" style="left:1383px;top:740px;width:23px;height:18px;background:#3e3e3e;border:1px solid #363636;"></div>
<svg style="left:1356px;top:740px" width="51" height="18" viewBox="0 0 51 18"><path d="M6,12.6 L11.2,6 L16.4,12.6 Z" fill="none" stroke="#dfa032" stroke-width="1.9" stroke-linejoin="round"/><path d="M29,12.8 L33,7.6 L44.6,7.6 L48.5,12.8 Z M31.5,6 L33,7.6 M46,6 L44.6,7.6" fill="none" stroke="#dfa032" stroke-width="1.7" stroke-linejoin="round"/></svg>
<div class="a" style="left:8.3px;top:765px;width:14.8px;height:16.6px;background:#3c3c3c;border:1px solid #333;"></div>
<svg style="left:8.2px;top:765.5px" width="15" height="16" viewBox="0 0 15 16"><path d="M4,12 L11,4.6 M6.8,4.3 L11.2,4.3 L11.2,8.8 M3.8,7.8 L3.8,12.3 L8.2,12.3" fill="none" stroke="#dfa032" stroke-width="1.3"/></svg>
<div class="a" style="left:46px;top:761px;width:1343.5px;height:2px;background:#474747;"></div>
<div class="a" style="left:46px;top:762.6px;width:33px;height:18px;background:#464646;"></div>
<div class="a" style="left:79px;top:762.8px;width:1310.5px;height:17.7px;background:#8d7033;border-top:1px solid #98793a;"></div>
<div class="a" style="left:46px;top:780.5px;width:1343.5px;height:17px;background:#444444;"></div>
<div class="a" style="left:46px;top:797.4px;width:1343.5px;height:121.1px;background:#555555;"></div>
<svg style="left:0px;top:0px" width="1411" height="941" viewBox="0 0 1411 941"><path d="M80.2,778.7 v1.8 M97.1,778.7 v1.8 M114.0,777.1 v3.4 M130.9,778.7 v1.8 M147.8,778.7 v1.8 M164.7,777.1 v3.4 M181.6,778.7 v1.8 M198.5,778.7 v1.8 M215.4,777.1 v3.4 M232.3,778.7 v1.8 M249.2,778.7 v1.8 M266.1,777.1 v3.4 M283.0,778.7 v1.8 M299.9,778.7 v1.8 M316.8,777.1 v3.4 M333.7,778.7 v1.8 M350.6,778.7 v1.8 M367.5,777.1 v3.4 M384.4,778.7 v1.8 M401.3,778.7 v1.8 M418.2,777.1 v3.4 M435.1,778.7 v1.8 M452.0,778.7 v1.8 M468.9,777.1 v3.4 M485.8,778.7 v1.8 M502.7,778.7 v1.8 M519.6,777.1 v3.4 M536.5,778.7 v1.8 M553.4,778.7 v1.8 M570.3,777.1 v3.4 M587.2,778.7 v1.8 M604.1,778.7 v1.8 M621.0,777.1 v3.4 M637.9,778.7 v1.8 M654.8,778.7 v1.8 M671.7,777.1 v3.4 M688.6,778.7 v1.8 M705.5,778.7 v1.8 M722.4,777.1 v3.4 M739.3,778.7 v1.8 M756.2,778.7 v1.8 M773.1,777.1 v3.4 M790.0,778.7 v1.8 M806.9,778.7 v1.8 M823.8,777.1 v3.4 M840.7,778.7 v1.8 M857.6,778.7 v1.8 M874.5,777.1 v3.4 M891.4,778.7 v1.8 M908.3,778.7 v1.8 M925.2,777.1 v3.4 M942.1,778.7 v1.8 M959.0,778.7 v1.8 M975.9,777.1 v3.4 M992.8,778.7 v1.8 M1009.7,778.7 v1.8 M1026.6,777.1 v3.4 M1043.5,778.7 v1.8 M1060.4,778.7 v1.8 M1077.3,777.1 v3.4 M1094.2,778.7 v1.8 M1111.1,778.7 v1.8 M1128.0,777.1 v3.4 M1144.9,778.7 v1.8 M1161.8,778.7 v1.8 M1178.7,777.1 v3.4 M1195.6,778.7 v1.8 M1212.5,778.7 v1.8 M1229.4,777.1 v3.4 M1246.3,778.7 v1.8 M1263.2,778.7 v1.8 M1280.1,777.1 v3.4 M1297.0,778.7 v1.8 M1313.9,778.7 v1.8 M1330.8,777.1 v3.4 M1347.7,778.7 v1.8 M1364.6,778.7 v1.8 M1381.5,777.1 v3.4 " stroke="#3b2f15" stroke-width="1.1" opacity="0.85"/><path d="M59.3,776 L67.3,776 M60.3,777.6 L66.3,777.6 L63.3,781.3 Z" stroke="#dfa032" stroke-width="1.2" fill="#dfa032"/><path d="M62.7,779 L62.7,918.5" stroke="#b8781e" stroke-width="1.8"/><path d="M64.5,779 L64.5,918.5" stroke="#ecd2ac" stroke-width="1.8"/><path d="M80,763 L100,771.3 L80,779.6 Z" fill="#11990f"/><path d="M469.5,812.5 L469.5,918.5" stroke="#c6c6c6" stroke-width="1.5"/><path d="M875.1,812.5 L875.1,918.5" stroke="#c6c6c6" stroke-width="1.5"/><path d="M1280.7,812.5 L1280.7,918.5" stroke="#c6c6c6" stroke-width="1.5"/></svg>
<div class="a" style="left:1390px;top:762px;width:20px;height:156.5px;background:#424242;"></div>
<div class="a" style="left:1390px;top:762px;width:20px;height:20.5px;background:#434343;border:1px solid #373737;"></div>
<div class="a" style="left:1390px;top:897px;width:20px;height:21.5px;background:#434343;border:1px solid #373737;"></div>
<svg style="left:1395.7px;top:768px" width="8.6" height="8" viewBox="0 0 8.6 8"><path d="M0,8 L8.6,8 L4.3,0 Z" fill="#9e9e9e"/></svg>
<svg style="left:1395.7px;top:903.7px" width="8.6" height="8" viewBox="0 0 8.6 8"><path d="M0,0 L8.6,0 L4.3,8 Z" fill="#9e9e9e"/></svg>
<div class="a" style="left:46px;top:918.5px;width:1343.5px;height:19.5px;background:#424242;border-top:1px solid #3c3c3c;"></div>
<div class="a" style="left:46px;top:919px;width:22px;height:19px;background:#434343;border:1px solid #373737;"></div>
<svg style="left:53px;top:924.5px" width="8" height="8.4" viewBox="0 0 8 8.4"><path d="M8,0 L8,8.4 L0,4.2 Z" fill="#9e9e9e"/></svg>
<div class="a" style="left:68px;top:919.5px;width:40.5px;height:18.5px;background:#5b5b5b;"></div>
<div class="a" style="left:1368.5px;top:919px;width:21px;height:19px;background:#434343;border:1px solid #373737;"></div>
<svg style="left:1374.6px;top:924.5px" width="8" height="8.4" viewBox="0 0 8 8.4"><path d="M0,0 L0,8.4 L8,4.2 Z" fill="#9e9e9e"/></svg>
<div class="a" style="left:1390px;top:919px;width:20px;height:19px;background:#535353;"></div>
<div class="a" style="left:1415.5px;top:137px;width:261px;height:801px;background:#545454;"></div>
<div class="a" style="left:1410.8px;top:137px;width:2.7px;height:568px;background:#212125;"></div>
<div class="a" style="left:1413.5px;top:137px;width:2.1px;height:568px;background:#484848;"></div>
<div class="a" style="left:1410.6px;top:704px;width:1.7px;height:234px;background:#323232;"></div>
<div class="a" style="left:1412.3px;top:704px;width:2.3px;height:234px;background:#4a4a4a;"></div>
<div class="a" style="left:1414.6px;top:704px;width:1px;height:234px;background:#3a3a3a;"></div>
<div class="a" style="left:1415.6px;top:582.5px;width:2.2px;height:355.5px;background:#4c4c4c;"></div>
<div class="a" style="left:1415.2px;top:137.4px;width:261px;height:18.6px;background:#3f3f3f;border:1px solid #2c2c2c;"></div>
<div class="a" style="left:1424.5px;top:169.3px;width:14.5px;height:14.5px;background:#494949;border:1px solid #444;"></div>
<div class="a" style="left:1505.6px;top:164.3px;width:45.8px;height:24px;background:#fdfdfc;border:1.3px solid #363636;"></div>
<div class="a" style="left:1424.5px;top:196.6px;width:14.5px;height:14.5px;background:#494949;border:1px solid #444;"></div>
<div class="a" style="left:1505.6px;top:193px;width:45.8px;height:22.3px;background:#000;border:1px solid #333;"></div>
<div class="a" style="left:1588px;top:192.5px;width:50.3px;height:50.8px;background:#e9e9e9;border:1px solid #3a3a3a;"></div>
<div class="a" style="left:1507px;top:221px;width:71px;height:21.5px;background:#e4e4e4;border:1px solid #f4f4f4;"></div>
<div class="a" style="left:1505.5px;top:248px;width:73.5px;height:22px;background:#444;border:1px solid #3a3a3a;"></div>
<svg style="left:1561.5px;top:255.5px" width="10" height="9" viewBox="0 0 10 9"><path d="M0,0 L10,0 L5.0,9 Z" fill="#9a9a9a"/></svg>
<div class="a" style="left:1589px;top:249.5px;width:30.5px;height:20px;background:#4b4b4b;border:1px solid #474747;"></div>
<div class="a" style="left:1432.5px;top:275px;width:197.5px;height:1px;background:#3c3c3c;"></div>
<div class="a" style="left:1475.5px;top:282px;width:145.5px;height:22.5px;background:#444;border:1px solid #3a3a3a;"></div>
<svg style="left:1603px;top:289.5px" width="10" height="9" viewBox="0 0 10 9"><path d="M0,0 L10,0 L5.0,9 Z" fill="#9a9a9a"/></svg>
<svg style="left:0px;top:0px" width="1679" height="430" viewBox="0 0 1679 430"><rect x="1437" y="308" width="188.4" height="119.0" fill="#484848"/><rect x="1438.00" y="309.0" width="11.95" height="11.8" fill="#ff0000"/><rect x="1449.65" y="309.0" width="11.95" height="11.8" fill="#ffff00"/><rect x="1461.30" y="309.0" width="11.95" height="11.8" fill="#00ff00"/><rect x="1472.95" y="309.0" width="11.95" height="11.8" fill="#00ffff"/><rect x="1484.60" y="309.0" width="11.95" height="11.8" fill="#0000ff"/><rect x="1496.25" y="309.0" width="11.95" height="11.8" fill="#ff00ff"/><rect x="1507.90" y="309.0" width="11.95" height="11.8" fill="#ffffff"/><rect x="1519.55" y="309.0" width="11.95" height="11.8" fill="#f0f0f0"/><rect x="1531.20" y="309.0" width="11.95" height="11.8" fill="#e6e6e6"/><rect x="1542.85" y="309.0" width="11.95" height="11.8" fill="#dcdcdc"/><rect x="1554.50" y="309.0" width="11.95" height="11.8" fill="#d2d2d2"/><rect x="1566.15" y="309.0" width="11.95" height="11.8" fill="#c8c8c8"/><rect x="1577.80" y="309.0" width="11.95" height="11.8" fill="#bebebe"/><rect x="1589.45" y="309.0" width="11.95" height="11.8" fill="#b4b4b4"/><rect x="1601.10" y="309.0" width="11.95" height="11.8" fill="#aaaaaa"/><rect x="1612.75" y="309.0" width="11.95" height="11.8" fill="#a0a0a0"/><rect x="1438.00" y="320.5" width="11.95" height="11.8" fill="#d40030"/><rect x="1449.65" y="320.5" width="11.95" height="11.8" fill="#ffff00"/><rect x="1461.30" y="320.5" width="11.95" height="11.8" fill="#1fa050"/><rect x="1472.95" y="320.5" width="11.95" height="11.8" fill="#30a0f0"/><rect x="1484.60" y="320.5" width="11.95" height="11.8" fill="#401890"/><rect x="1496.25" y="320.5" width="11.95" height="11.8" fill="#d40080"/><rect x="1507.90" y="320.5" width="11.95" height="11.8" fill="#909090"/><rect x="1519.55" y="320.5" width="11.95" height="11.8" fill="#808080"/><rect x="1531.20" y="320.5" width="11.95" height="11.8" fill="#707070"/><rect x="1542.85" y="320.5" width="11.95" height="11.8" fill="#606060"/><rect x="1554.50" y="320.5" width="11.95" height="11.8" fill="#505050"/><rect x="1566.15" y="320.5" width="11.95" height="11.8" fill="#404040"/><rect x="1577.80" y="320.5" width="11.95" height="11.8" fill="#303030"/><rect x="1589.45" y="320.5" width="11.95" height="11.8" fill="#202020"/><rect x="1601.10" y="320.5" width="11.95" height="11.8" fill="#101010"/><rect x="1612.75" y="320.5" width="11.95" height="11.8" fill="#000000"/><rect x="1438.00" y="332.0" width="11.95" height="11.8" fill="#e0a080"/><rect x="1449.65" y="332.0" width="11.95" height="11.8" fill="#e8b080"/><rect x="1461.30" y="332.0" width="11.95" height="11.8" fill="#f0c888"/><rect x="1472.95" y="332.0" width="11.95" height="11.8" fill="#fff888"/><rect x="1484.60" y="332.0" width="11.95" height="11.8" fill="#d0e098"/><rect x="1496.25" y="332.0" width="11.95" height="11.8" fill="#b0d890"/><rect x="1507.90" y="332.0" width="11.95" height="11.8" fill="#98d0a0"/><rect x="1519.55" y="332.0" width="11.95" height="11.8" fill="#98d0c8"/><rect x="1531.20" y="332.0" width="11.95" height="11.8" fill="#a0d0f8"/><rect x="1542.85" y="332.0" width="11.95" height="11.8" fill="#98a8e0"/><rect x="1554.50" y="332.0" width="11.95" height="11.8" fill="#9890d0"/><rect x="1566.15" y="332.0" width="11.95" height="11.8" fill="#a088c8"/><rect x="1577.80" y="332.0" width="11.95" height="11.8" fill="#b088c8"/><rect x="1589.45" y="332.0" width="11.95" height="11.8" fill="#c890c8"/><rect x="1601.10" y="332.0" width="11.95" height="11.8" fill="#e898c0"/><rect x="1612.75" y="332.0" width="11.95" height="11.8" fill="#e8a098"/><rect x="1438.00" y="343.5" width="11.95" height="11.8" fill="#e08060"/><rect x="1449.65" y="343.5" width="11.95" height="11.8" fill="#e8a060"/><rect x="1461.30" y="343.5" width="11.95" height="11.8" fill="#f0c060"/><rect x="1472.95" y="343.5" width="11.95" height="11.8" fill="#fff860"/><rect x="1484.60" y="343.5" width="11.95" height="11.8" fill="#b8d878"/><rect x="1496.25" y="343.5" width="11.95" height="11.8" fill="#90d078"/><rect x="1507.90" y="343.5" width="11.95" height="11.8" fill="#68c088"/><rect x="1519.55" y="343.5" width="11.95" height="11.8" fill="#68c0c0"/><rect x="1531.20" y="343.5" width="11.95" height="11.8" fill="#70b8f8"/><rect x="1542.85" y="343.5" width="11.95" height="11.8" fill="#6890d8"/><rect x="1554.50" y="343.5" width="11.95" height="11.8" fill="#6870c8"/><rect x="1566.15" y="343.5" width="11.95" height="11.8" fill="#7858b0"/><rect x="1577.80" y="343.5" width="11.95" height="11.8" fill="#9860b0"/><rect x="1589.45" y="343.5" width="11.95" height="11.8" fill="#b860b0"/><rect x="1601.10" y="343.5" width="11.95" height="11.8" fill="#e868a8"/><rect x="1612.75" y="343.5" width="11.95" height="11.8" fill="#e87080"/><rect x="1438.00" y="355.0" width="11.95" height="11.8" fill="#d40030"/><rect x="1449.65" y="355.0" width="11.95" height="11.8" fill="#e87830"/><rect x="1461.30" y="355.0" width="11.95" height="11.8" fill="#f0a828"/><rect x="1472.95" y="355.0" width="11.95" height="11.8" fill="#ffff00"/><rect x="1484.60" y="355.0" width="11.95" height="11.8" fill="#98c838"/><rect x="1496.25" y="355.0" width="11.95" height="11.8" fill="#58b848"/><rect x="1507.90" y="355.0" width="11.95" height="11.8" fill="#20a850"/><rect x="1519.55" y="355.0" width="11.95" height="11.8" fill="#28a898"/><rect x="1531.20" y="355.0" width="11.95" height="11.8" fill="#30a0f0"/><rect x="1542.85" y="355.0" width="11.95" height="11.8" fill="#3870c8"/><rect x="1554.50" y="355.0" width="11.95" height="11.8" fill="#3850b0"/><rect x="1566.15" y="355.0" width="11.95" height="11.8" fill="#401890"/><rect x="1577.80" y="355.0" width="11.95" height="11.8" fill="#681090"/><rect x="1589.45" y="355.0" width="11.95" height="11.8" fill="#980890"/><rect x="1601.10" y="355.0" width="11.95" height="11.8" fill="#d80888"/><rect x="1612.75" y="355.0" width="11.95" height="11.8" fill="#d40060"/><rect x="1438.00" y="366.5" width="11.95" height="11.8" fill="#980020"/><rect x="1449.65" y="366.5" width="11.95" height="11.8" fill="#a85020"/><rect x="1461.30" y="366.5" width="11.95" height="11.8" fill="#b07818"/><rect x="1472.95" y="366.5" width="11.95" height="11.8" fill="#b8b000"/><rect x="1484.60" y="366.5" width="11.95" height="11.8" fill="#689030"/><rect x="1496.25" y="366.5" width="11.95" height="11.8" fill="#408830"/><rect x="1507.90" y="366.5" width="11.95" height="11.8" fill="#107838"/><rect x="1519.55" y="366.5" width="11.95" height="11.8" fill="#187870"/><rect x="1531.20" y="366.5" width="11.95" height="11.8" fill="#2078b0"/><rect x="1542.85" y="366.5" width="11.95" height="11.8" fill="#285090"/><rect x="1554.50" y="366.5" width="11.95" height="11.8" fill="#283880"/><rect x="1566.15" y="366.5" width="11.95" height="11.8" fill="#300868"/><rect x="1577.80" y="366.5" width="11.95" height="11.8" fill="#480868"/><rect x="1589.45" y="366.5" width="11.95" height="11.8" fill="#700868"/><rect x="1601.10" y="366.5" width="11.95" height="11.8" fill="#a00060"/><rect x="1612.75" y="366.5" width="11.95" height="11.8" fill="#980040"/><rect x="1438.00" y="378.0" width="11.95" height="11.8" fill="#700018"/><rect x="1449.65" y="378.0" width="11.95" height="11.8" fill="#803810"/><rect x="1461.30" y="378.0" width="11.95" height="11.8" fill="#805808"/><rect x="1472.95" y="378.0" width="11.95" height="11.8" fill="#888000"/><rect x="1484.60" y="378.0" width="11.95" height="11.8" fill="#486820"/><rect x="1496.25" y="378.0" width="11.95" height="11.8" fill="#306020"/><rect x="1507.90" y="378.0" width="11.95" height="11.8" fill="#085828"/><rect x="1519.55" y="378.0" width="11.95" height="11.8" fill="#105858"/><rect x="1531.20" y="378.0" width="11.95" height="11.8" fill="#185888"/><rect x="1542.85" y="378.0" width="11.95" height="11.8" fill="#183868"/><rect x="1554.50" y="378.0" width="11.95" height="11.8" fill="#182860"/><rect x="1566.15" y="378.0" width="11.95" height="11.8" fill="#200850"/><rect x="1577.80" y="378.0" width="11.95" height="11.8" fill="#300850"/><rect x="1589.45" y="378.0" width="11.95" height="11.8" fill="#500850"/><rect x="1601.10" y="378.0" width="11.95" height="11.8" fill="#780048"/><rect x="1612.75" y="378.0" width="11.95" height="11.8" fill="#700030"/><rect x="1438.00" y="391.5" width="11.95" height="11.8" fill="#c8b8a0"/><rect x="1449.65" y="391.5" width="11.95" height="11.8" fill="#a09080"/><rect x="1461.30" y="391.5" width="11.95" height="11.8" fill="#807060"/><rect x="1472.95" y="391.5" width="11.95" height="11.8" fill="#584840"/><rect x="1484.60" y="391.5" width="11.95" height="11.8" fill="#383030"/><rect x="1496.25" y="391.5" width="11.95" height="11.8" fill="#c0a068"/><rect x="1507.90" y="391.5" width="11.95" height="11.8" fill="#a88850"/><rect x="1519.55" y="391.5" width="11.95" height="11.8" fill="#987840"/><rect x="1531.20" y="391.5" width="11.95" height="11.8" fill="#805828"/><rect x="1542.85" y="391.5" width="11.95" height="11.8" fill="#604020"/><rect x="1554.50" y="391.5" width="11.95" height="11.8" fill="#ffffff"/><rect x="1566.15" y="391.5" width="11.95" height="11.8" fill="#ffffb0"/><rect x="1577.80" y="391.5" width="11.95" height="11.8" fill="#ffff90"/><rect x="1589.45" y="391.5" width="11.95" height="11.8" fill="#ffff60"/><rect x="1601.10" y="391.5" width="11.95" height="11.8" fill="#ffff30"/><rect x="1612.75" y="391.5" width="11.95" height="11.8" fill="#ffff00"/><rect x="1438.00" y="403.0" width="11.95" height="11.8" fill="#ffe030"/><rect x="1449.65" y="403.0" width="11.95" height="11.8" fill="#ffc8ff"/><rect x="1461.30" y="403.0" width="11.95" height="11.8" fill="#ffd0c8"/><rect x="1472.95" y="403.0" width="11.95" height="11.8" fill="#ffd098"/><rect x="1484.60" y="403.0" width="11.95" height="11.8" fill="#ffd060"/><rect x="1496.25" y="403.0" width="11.95" height="11.8" fill="#ffd030"/><rect x="1507.90" y="403.0" width="11.95" height="11.8" fill="#ffc800"/><rect x="1519.55" y="403.0" width="11.95" height="11.8" fill="#ffa818"/><rect x="1531.20" y="403.0" width="11.95" height="11.8" fill="#ff90ff"/><rect x="1542.85" y="403.0" width="11.95" height="11.8" fill="#ff90c8"/><rect x="1554.50" y="403.0" width="11.95" height="11.8" fill="#ff9098"/><rect x="1566.15" y="403.0" width="11.95" height="11.8" fill="#ff9860"/><rect x="1577.80" y="403.0" width="11.95" height="11.8" fill="#ffa030"/><rect x="1589.45" y="403.0" width="11.95" height="11.8" fill="#ffa000"/><rect x="1601.10" y="403.0" width="11.95" height="11.8" fill="#ff60ff"/><rect x="1612.75" y="403.0" width="11.95" height="11.8" fill="#ff60c8"/><rect x="1438.00" y="414.5" width="11.95" height="11.8" fill="#ff6098"/><rect x="1449.65" y="414.5" width="11.95" height="11.8" fill="#ff6060"/><rect x="1461.30" y="414.5" width="11.95" height="11.8" fill="#ff6830"/><rect x="1472.95" y="414.5" width="11.95" height="11.8" fill="#ff6800"/><rect x="1484.60" y="414.5" width="11.95" height="11.8" fill="#ff30d0"/><rect x="1496.25" y="414.5" width="11.95" height="11.8" fill="#ff30a0"/><rect x="1507.90" y="414.5" width="11.95" height="11.8" fill="#ff3060"/><rect x="1519.55" y="414.5" width="11.95" height="11.8" fill="#ff3030"/><rect x="1531.20" y="414.5" width="11.95" height="11.8" fill="#ff3000"/><rect x="1542.85" y="414.5" width="11.95" height="11.8" fill="#ff00ff"/><rect x="1554.50" y="414.5" width="11.95" height="11.8" fill="#ff00d0"/><rect x="1566.15" y="414.5" width="11.95" height="11.8" fill="#ff0098"/><rect x="1577.80" y="414.5" width="11.95" height="11.8" fill="#ff0060"/><rect x="1589.45" y="414.5" width="11.95" height="11.8" fill="#ff0030"/><rect x="1601.10" y="414.5" width="11.95" height="11.8" fill="#ff0000"/><rect x="1612.75" y="414.5" width="11.95" height="11.8" fill="#f0f0f0"/><path d="M1449.65,309 v117.0 M1461.30,309 v117.0 M1472.95,309 v117.0 M1484.60,309 v117.0 M1496.25,309 v117.0 M1507.90,309 v117.0 M1519.55,309 v117.0 M1531.20,309 v117.0 M1542.85,309 v117.0 M1554.50,309 v117.0 M1566.15,309 v117.0 M1577.80,309 v117.0 M1589.45,309 v117.0 M1601.10,309 v117.0 M1612.75,309 v117.0 M1438,320.5 h186.4 M1438,332.0 h186.4 M1438,343.5 h186.4 M1438,355.0 h186.4 M1438,366.5 h186.4 M1438,378.0 h186.4 M1438,391.5 h186.4 M1438,403.0 h186.4 M1438,414.5 h186.4 " stroke="#000" stroke-opacity="0.28" stroke-width="1"/></svg>
<div class="a" style="left:1438.5px;top:431.5px;width:48.5px;height:21.5px;background:#444;border:1px solid #3a3a3a;"></div>
<div class="a" style="left:1497.5px;top:431.5px;width:58px;height:21.5px;background:#4b4b4b;border:1px solid #454545;"></div>
<div class="a" style="left:1566px;top:431.5px;width:57.5px;height:21.5px;background:#444;border:1px solid #3a3a3a;"></div>
<div class="a" style="left:1424px;top:462.5px;width:14.5px;height:14.5px;background:#424242;border:1px solid #383838;"></div>
<div class="a" style="left:1481.5px;top:462.5px;width:14.5px;height:14.5px;background:#424242;border:1px solid #383838;"></div>
<svg style="left:0px;top:0px" width="1679" height="480" viewBox="0 0 1679 480"><path d="M1426.8,176.10000000000002 L1430.1,181.60000000000002 L1437.3,170.5" fill="none" stroke="#b8862e" stroke-width="2.3"/><g transform="translate(1558,166.6)"><path d="M0.7,17.6 L1.6,14.3 L9.6,6.2 L12.3,8.9 L4.2,17 Z" fill="none" stroke="#e6e6e6" stroke-width="1.3" stroke-linejoin="round"/><path d="M8.6,5.3 L10.6,3.3 L11.9,4.5 L13.9,2.3 C15.3,1 17.6,3.1 16.3,4.7 L14.3,6.7 L15.5,8.1 L13.5,10.1 Z" fill="#dfa032"/></g><path d="M1426.8,203.4 L1430.1,208.9 L1437.3,197.79999999999998" fill="none" stroke="#b8862e" stroke-width="2.3"/><g transform="translate(1558,194.3)"><path d="M0.7,17.6 L1.6,14.3 L9.6,6.2 L12.3,8.9 L4.2,17 Z" fill="none" stroke="#e6e6e6" stroke-width="1.3" stroke-linejoin="round"/><path d="M8.6,5.3 L10.6,3.3 L11.9,4.5 L13.9,2.3 C15.3,1 17.6,3.1 16.3,4.7 L14.3,6.7 L15.5,8.1 L13.5,10.1 Z" fill="#dfa032"/></g><path d="M1483.8,469.3 L1487.1,474.8 L1494.3,463.7" fill="none" stroke="#dfa032" stroke-width="2.7"/></svg>
<div class="a" style="left:1415.5px;top:489.2px;width:261px;height:1.7px;background:#2e2e2e;"></div>
<div class="a" style="left:1415.5px;top:490.8px;width:261px;height:17.3px;background:#3f3f3f;border-bottom:1px solid #2e2e2e;"></div>
<div class="a" style="left:1417.6px;top:509.3px;width:22.5px;height:18.3px;background:#444;border:1px solid #3a3a3a;"></div>
<div class="a" style="left:1443.8999999999999px;top:509.3px;width:22.5px;height:18.3px;background:#444;border:1px solid #3a3a3a;"></div>
<div class="a" style="left:1470.3px;top:509.3px;width:22.5px;height:18.3px;background:#444;border:1px solid #3a3a3a;"></div>
<div class="a" style="left:1496.6px;top:509.3px;width:22.5px;height:18.3px;background:#444;border:1px solid #3a3a3a;"></div>
<div class="a" style="left:1522.8999999999999px;top:509.3px;width:22.5px;height:18.3px;background:#444;border:1px solid #3a3a3a;"></div>
<div class="a" style="left:1549.3px;top:509.3px;width:22.5px;height:18.3px;background:#444;border:1px solid #3a3a3a;"></div>
<div class="a" style="left:1657px;top:509.5px;width:18.5px;height:18.5px;background:#444;border:1px solid #3a3a3a;"></div>
<div class="a" style="left:1418px;top:531px;width:121px;height:23.3px;background:#444;border:1px solid #3a3a3a;"></div>
<svg style="left:1522px;top:538.5px" width="10" height="9" viewBox="0 0 10 9"><path d="M0,0 L10,0 L5.0,9 Z" fill="#9a9a9a"/></svg>
<div class="a" style="left:1544px;top:531px;width:126px;height:23.3px;background:#e4e4e4;border:1px solid #f4f4f4;"></div>
<div class="a" style="left:1418px;top:558.5px;width:258px;height:24px;background:#444;"></div>
<div class="a" style="left:1449px;top:558.5px;width:1px;height:24px;background:#383838;"></div>
<div class="a" style="left:1476.5px;top:558.5px;width:1px;height:24px;background:#383838;"></div>
<div class="a" style="left:1615px;top:558.5px;width:1px;height:24px;background:#383838;"></div>
<div class="a" style="left:1642.5px;top:558.5px;width:1px;height:24px;background:#383838;"></div>
<div class="a" style="left:1667px;top:558.5px;width:1px;height:24px;background:#383838;"></div>
<div class="a" style="left:1418px;top:583.4px;width:236px;height:22.8px;background:#cf962a;"></div>
<div class="a" style="left:1418px;top:606.2px;width:236px;height:23.1px;background:#484848;"></div>
<div class="a" style="left:1418px;top:629.3px;width:236px;height:23px;background:#545454;"></div>
<div class="a" style="left:1425.4px;top:585.6px;width:19.6px;height:16.2px;background:#5c626c;border:1px solid #70767f;"></div>
<div class="a" style="left:1425.4px;top:608.6px;width:19.6px;height:16.2px;background:#5b5b5b;border:1px solid #6a6a6a;"></div>
<div class="a" style="left:1425.4px;top:631.6px;width:19.6px;height:16.2px;background:#5b5b5b;border:1px solid #6a6a6a;"></div>
<div class="a" style="left:1454.8px;top:588.2px;width:14.8px;height:14.2px;background:#43464c;border:1px solid #3d424c;"></div>
<div class="a" style="left:1454.8px;top:611.2px;width:14.8px;height:14.2px;background:#4e4e4e;border:1px solid #444;"></div>
<div class="a" style="left:1454.8px;top:634.4px;width:14.8px;height:14.2px;background:#4b4b4b;border:1px solid #444;"></div>
<div class="a" style="left:1621.6px;top:588.6px;width:12.5px;height:12.2px;background:#7d7d7d;border:1px solid #5a6270;"></div>
<div class="a" style="left:1621.6px;top:611.6px;width:12.5px;height:12.2px;background:#747474;border:1px solid #5e5e5e;"></div>
<div class="a" style="left:1621.6px;top:634.8px;width:12.5px;height:12.2px;background:#747474;border:1px solid #5e5e5e;"></div>
<svg style="left:0px;top:0px" width="1679" height="660" viewBox="0 0 1679 660"><path d="M1419.8,523.6 L1419.8,516.8 L1422.8,516.8 L1422.8,513 L1427.3999999999999,513 L1430.2,515.8 L1430.2,523.6 Z" fill="none" stroke="#dcdcdc" stroke-width="1.5" stroke-linejoin="round"/><path d="M1425.3999999999999,513.8 L1429.3999999999999,513.8 L1429.3999999999999,517.4 L1425.3999999999999,517.4 Z" fill="#1c1c1c" opacity="0.85"/><path d="M1433.7,514.3 v7.6 M1429.9,518.1 h7.6" stroke="#dfa032" stroke-width="2.3"/><rect x="1451.8" y="511.6" width="8.6" height="10.6" rx="2" fill="none" stroke="#cfcfcf" stroke-width="1.4"/><rect x="1448.2" y="514" width="8.6" height="10.8" rx="2" fill="#444" stroke="#cfcfcf" stroke-width="1.4"/><path d="M1472.6,523.6 L1472.6,516.8 L1475.6,516.8 L1475.6,513 L1480.1999999999998,513 L1483.0,515.8 L1483.0,523.6 Z" fill="none" stroke="#dcdcdc" stroke-width="1.5" stroke-linejoin="round"/><path d="M1478.1999999999998,513.8 L1482.1999999999998,513.8 L1482.1999999999998,517.4 L1478.1999999999998,517.4 Z" fill="#1c1c1c" opacity="0.85"/><path d="M1481,518.1 h5" stroke="#dfa032" stroke-width="2.3"/><path d="M1485,514.3 L1489.6,518.1 L1485,521.9 Z" fill="#dfa032"/><path d="M1502.8,514.6 h9.4 M1505.8,514 v-1.6 h3.4 v1.6" stroke="#dcdcdc" stroke-width="1.4" fill="none"/><path d="M1503.4,516 h8.2 v7 q0,1.2 -1.2,1.2 h-5.8 q-1.2,0 -1.2,-1.2 Z" fill="#cfcfcf"/><path d="M1506.2,517.3 v5.4 M1508.8,517.3 v5.4" stroke="#555" stroke-width="1"/><circle cx="1529.6" cy="518.4" r="1.45" fill="#e6e6e6"/><circle cx="1534.2" cy="518.4" r="1.45" fill="#e6e6e6"/><circle cx="1538.8" cy="518.4" r="1.45" fill="#e6e6e6"/><path d="M1557.5,514.5 L1562,512.5 L1566.5,516.5 L1566.5,523.5 L1562.5,525 L1557.5,522 Z" fill="#9e9e9e" stroke="#d8d8d8" stroke-width="1.1" stroke-linejoin="round"/><circle cx="1557.6" cy="516.8" r="4.3" fill="#dedede"/><path d="M1557.6,516.8 v-4.3 A4.3,4.3 0 0 0 1553.3,516.8 Z" fill="#2a2a2a"/><path d="M1561,520 v4 M1563.4,519.4 v4.6" stroke="#666" stroke-width="0.9"/><path d="M1661,521.3 L1666.3,516 L1671.6,521.3" fill="none" stroke="#e6e6e6" stroke-width="2.2"/><path d="M1427.6,573.3 C1427.2,568.6 1433,567.6 1433.6,571.6 C1433.9,574 1431.8,575 1430.6,574 Z M1434,571.2 C1434.4,567.6 1439.6,568.4 1439,572.8 C1438.6,575 1436.4,575 1435.6,573.6 Z" fill="#f2f2f2"/><circle cx="1431.6" cy="572.4" r="1.5" fill="#222"/><circle cx="1436.6" cy="572.4" r="1.5" fill="#222"/><circle cx="1462" cy="571.6" r="4" fill="none" stroke="#dedede" stroke-width="1.8"/><circle cx="1462" cy="571.6" r="1.1" fill="#dedede"/><path d="M1460.2,564.2 h3.6 v2.6 h-3.6 Z" fill="#dedede"/><rect x="1622.5" y="565.5" width="9.5" height="9.5" fill="#4d9be8"/><rect x="1622.5" y="565.5" width="5" height="5" fill="#3fc264"/><rect x="1627.5" y="565.5" width="4.5" height="9.5" fill="#f0c020"/><rect x="1622.5" y="570.5" width="5" height="4.5" fill="#4d9be8"/><path d="M1648.5,566.5 L1658.5,566.5 L1653.5,574.5 Z" fill="#f0f0f0"/><ellipse cx="1431.4" cy="594.0" rx="4.1" ry="4.5" fill="#fff" stroke="#111" stroke-width="0.9"/><ellipse cx="1439.4" cy="594.0" rx="4.1" ry="4.5" fill="#fff" stroke="#111" stroke-width="0.9"/><circle cx="1432.9" cy="595.2" r="2.4" fill="#111"/><circle cx="1439.1" cy="595.2" r="2.4" fill="#111"/><path d="M1427.2,592.5 C1428.5,588.2 1434,588.2 1435.4,592.0 C1436.6,588.2 1442.4,588.2 1443.6,592.5" fill="none" stroke="#111" stroke-width="1.7"/><ellipse cx="1431.4" cy="617.0" rx="4.1" ry="4.5" fill="#fff" stroke="#111" stroke-width="0.9"/><ellipse cx="1439.4" cy="617.0" rx="4.1" ry="4.5" fill="#fff" stroke="#111" stroke-width="0.9"/><circle cx="1432.9" cy="618.2" r="2.4" fill="#111"/><circle cx="1439.1" cy="618.2" r="2.4" fill="#111"/><path d="M1427.2,615.5 C1428.5,611.2 1434,611.2 1435.4,615.0 C1436.6,611.2 1442.4,611.2 1443.6,615.5" fill="none" stroke="#111" stroke-width="1.7"/><ellipse cx="1431.4" cy="640.0" rx="4.1" ry="4.5" fill="#fff" stroke="#111" stroke-width="0.9"/><ellipse cx="1439.4" cy="640.0" rx="4.1" ry="4.5" fill="#fff" stroke="#111" stroke-width="0.9"/><circle cx="1432.9" cy="641.2" r="2.4" fill="#111"/><circle cx="1439.1" cy="641.2" r="2.4" fill="#111"/><path d="M1427.2,638.5 C1428.5,634.2 1434,634.2 1435.4,638.0 C1436.6,634.2 1442.4,634.2 1443.6,638.5" fill="none" stroke="#111" stroke-width="1.7"/><path d="M1485,592.4 L1493.8,592.4 L1489.4,599.6 Z" fill="#eef2fa"/><g transform="translate(1500.3,590.3) scale(0.86,1)"><path d="M5,3 L13,3 C12.6,0.2 17.6,0.4 16.9,3.3 C18.4,4 18.4,5.5 16.9,5.8 C17.6,8.7 12.6,8.8 13,6 L5,6 C5.4,8.8 0.4,8.7 1.1,5.8 C-0.4,5.5 -0.4,4 1.1,3.3 C0.4,0.4 5.4,0.2 5,3 Z" fill="none" stroke="#f4dfae" stroke-width="1.6"/></g><path d="M1517.3,621.3 C1515.3,616.8 1519.3,614.3 1522.8,615.3 C1524.3,611.3 1531.3,611.3 1531.8,615.8 C1532.3,620.3 1528.3,623.8 1523.3,624.0999999999999 C1520.3,624.3 1518.3,623.3 1517.3,621.3 Z" fill="none" stroke="#e6e6e6" stroke-width="1.5"/><path d="M1501.3,644.5 C1499.3,640 1503.3,637.5 1506.8,638.5 C1508.3,634.5 1515.3,634.5 1515.8,639 C1516.3,643.5 1512.3,647 1507.3,647.3 C1504.3,647.5 1502.3,646.5 1501.3,644.5 Z" fill="none" stroke="#e6e6e6" stroke-width="1.5"/><path d="M1652,595.5 l3,3.5 l0,-5 Z" fill="#f0f0f0"/></svg>
<div class="a" style="left:1655px;top:584px;width:21px;height:334.5px;background:#424242;"></div>
<div class="a" style="left:1655px;top:584px;width:20px;height:18.6px;background:#434343;border:1px solid #373737;"></div>
<svg style="left:1660.3px;top:588.8px" width="9.4" height="8" viewBox="0 0 9.4 8"><path d="M0,8 L9.4,8 L4.7,0 Z" fill="#8a8a8a"/></svg>
<div class="a" style="left:1655px;top:897px;width:21px;height:21.5px;background:#434343;border:1px solid #373737;"></div>
<svg style="left:1661.2px;top:903.7px" width="8.6" height="8" viewBox="0 0 8.6 8"><path d="M0,0 L8.6,0 L4.3,8 Z" fill="#9e9e9e"/></svg>
<div class="a" style="left:1418px;top:918.5px;width:237px;height:19.5px;background:#424242;border-top:1px solid #3c3c3c;"></div>
<div class="a" style="left:1418px;top:919px;width:20.5px;height:19px;background:#434343;border:1px solid #373737;"></div>
<svg style="left:1424.3px;top:924.5px" width="8" height="8.4" viewBox="0 0 8 8.4"><path d="M8,0 L8,8.4 L0,4.2 Z" fill="#9e9e9e"/></svg>
<div class="a" style="left:1438.5px;top:919.5px;width:41.5px;height:18.5px;background:#5b5b5b;"></div>
<div class="a" style="left:1634.5px;top:919px;width:20.5px;height:19px;background:#434343;border:1px solid #373737;"></div>
<svg style="left:1641px;top:924.5px" width="8" height="8.4" viewBox="0 0 8 8.4"><path d="M0,0 L0,8.4 L8,4.2 Z" fill="#9e9e9e"/></svg>
<div class="a" style="left:1655px;top:919px;width:21px;height:19px;background:#535353;"></div>
<div class="a" style="left:0px;top:0px;width:1.7px;height:941px;background:#0b1838;"></div>
<div class="a" style="left:1.7px;top:31px;width:1.4px;height:910px;background:linear-gradient(90deg,#1d3f72,#39689c);"></div>
<div class="a" style="left:1676px;top:0px;width:3px;height:31px;background:#2f86d8;"></div>
<div class="a" style="left:1676px;top:31px;width:3px;height:910px;background:linear-gradient(90deg,#3a7cc0,#1f62a8 60%);"></div>
<div class="a" style="left:0px;top:938.5px;width:1679px;height:2.5px;background:linear-gradient(180deg,#3a78b0,#1f5f9c);"></div>
<svg id="txt" width="1679" height="941" viewBox="0 0 1679 941">
<text x="33" y="18.6" font-size="12" fill="#333c48" textLength="132" lengthAdjust="spacingAndGlyphs" stroke="#333c48" stroke-width="0.15">未タイトル.moho - Moho</text>
<text x="11" y="47.4" font-size="13" fill="#ececec" textLength="35" lengthAdjust="spacingAndGlyphs" stroke="#ececec" stroke-width="0.3">ファイル</text>
<text x="64" y="47.4" font-size="13" fill="#ececec" textLength="24" lengthAdjust="spacingAndGlyphs" stroke="#ececec" stroke-width="0.3">編集</text>
<text x="106" y="47.4" font-size="13" fill="#ececec" textLength="24" lengthAdjust="spacingAndGlyphs" stroke="#ececec" stroke-width="0.3">描画</text>
<text x="147" y="47.4" font-size="13" fill="#ececec" textLength="29" lengthAdjust="spacingAndGlyphs" stroke="#ececec" stroke-width="0.3">ボーン</text>
<text x="193" y="47.4" font-size="13" fill="#ececec" textLength="64" lengthAdjust="spacingAndGlyphs" stroke="#ececec" stroke-width="0.3">アニメーション</text>
<text x="273" y="47.4" font-size="13" fill="#ececec" textLength="46" lengthAdjust="spacingAndGlyphs" stroke="#ececec" stroke-width="0.3">スクリプト</text>
<text x="336" y="47.4" font-size="13" fill="#ececec" textLength="25" lengthAdjust="spacingAndGlyphs" stroke="#ececec" stroke-width="0.3">表示</text>
<text x="378" y="47.4" font-size="13" fill="#ececec" textLength="46" lengthAdjust="spacingAndGlyphs" stroke="#ececec" stroke-width="0.3">ウインドウ</text>
<text x="441" y="47.4" font-size="13" fill="#ececec" textLength="31" lengthAdjust="spacingAndGlyphs" stroke="#ececec" stroke-width="0.3">ヘルプ</text>
<text x="27" y="76.3" font-size="12.5" fill="#e6e6e6" textLength="86" lengthAdjust="spacingAndGlyphs" stroke="#e6e6e6" stroke-width="0.3">未タイトル.moho</text>
<text x="66" y="104.6" font-size="12.5" fill="#e6e6e6" textLength="63" lengthAdjust="spacingAndGlyphs" stroke="#e6e6e6" stroke-width="0.3">ボーンを選択</text>
<text x="189.5" y="104.9" font-size="12.5" fill="#56657a" textLength="13.0" lengthAdjust="spacingAndGlyphs" stroke="#56657a" stroke-width="0.15">B2</text>
<text x="6" y="132.9" font-size="12" fill="#e6e6e6" textLength="517" lengthAdjust="spacingAndGlyphs" stroke="#e6e6e6" stroke-width="0.3">新規ボーンを追加（&lt;shift&gt; をホールドして固定、&lt;alt&gt; でボーンを選択、&lt;ctrl/cmd&gt; でスナップを無効）</text>
<text x="1613" y="132.9" font-size="12" fill="#e6e6e6" textLength="59" lengthAdjust="spacingAndGlyphs" stroke="#e6e6e6" stroke-width="0.3">フレーム：0</text>
<text x="42" y="152.6" font-size="12.5" fill="#e6e6e6" textLength="28" lengthAdjust="spacingAndGlyphs" stroke="#e6e6e6" stroke-width="0.3">ツール</text>
<text x="6.5" y="172.2" font-size="12.5" fill="#e6e6e6" textLength="27.5" lengthAdjust="spacingAndGlyphs" stroke="#e6e6e6" stroke-width="0.3">ボーン</text>
<text x="6.5" y="260.0" font-size="12.5" fill="#e6e6e6" textLength="37.5" lengthAdjust="spacingAndGlyphs" stroke="#e6e6e6" stroke-width="0.3">レイヤー</text>
<text x="6.5" y="325.8" font-size="12.5" fill="#e6e6e6" textLength="26.5" lengthAdjust="spacingAndGlyphs" stroke="#e6e6e6" stroke-width="0.3">カメラ</text>
<text x="6.5" y="369.2" font-size="12.5" fill="#e6e6e6" textLength="65.5" lengthAdjust="spacingAndGlyphs" stroke="#e6e6e6" stroke-width="0.3">ワークスペース</text>
<text x="734" y="723.2" font-size="12.5" fill="#e6e6e6" textLength="36" lengthAdjust="spacingAndGlyphs" stroke="#e6e6e6" stroke-width="0.3">フレーム</text>
<text x="778.8" y="723.1" font-size="11" fill="#56626e" textLength="6.2" lengthAdjust="spacingAndGlyphs" stroke="#56626e" stroke-width="0.15">0</text>
<text x="857" y="723.0" font-size="12" fill="#ccc" textLength="5" lengthAdjust="spacingAndGlyphs" stroke="#ccc" stroke-width="0.3">/</text>
<text x="871" y="723.1" font-size="11" fill="#56626e" textLength="18.5" lengthAdjust="spacingAndGlyphs" stroke="#56626e" stroke-width="0.15">240</text>
<text x="1327" y="723.2" font-size="12.5" fill="#e6e6e6" textLength="50" lengthAdjust="spacingAndGlyphs" stroke="#e6e6e6" stroke-width="0.3">表示画質</text>
<text x="72.5" y="755.4" font-size="12.5" fill="#e6e6e6" textLength="48.5" lengthAdjust="spacingAndGlyphs" stroke="#e6e6e6" stroke-width="0.3">チャンネル</text>
<text x="136" y="755.4" font-size="12.5" fill="#e6e6e6" textLength="48.5" lengthAdjust="spacingAndGlyphs" stroke="#e6e6e6" stroke-width="0.3">シーケンサ</text>
<text x="199.5" y="755.4" font-size="12.5" fill="#e6e6e6" textLength="73.0" lengthAdjust="spacingAndGlyphs" stroke="#e6e6e6" stroke-width="0.3">モーショングラフ</text>
<text x="336.5" y="753.9" font-size="12.5" fill="#e6e6e6" textLength="37.5" lengthAdjust="spacingAndGlyphs" stroke="#e6e6e6" stroke-width="0.3">スムーズ</text>
<text x="428.5" y="754.1" font-size="12.5" fill="#e6e6e6" textLength="6.5" lengthAdjust="spacingAndGlyphs" stroke="#e6e6e6" stroke-width="0.3">1</text>
<text x="504.5" y="753.9" font-size="12.5" fill="#8e8e8e" textLength="66.5" lengthAdjust="spacingAndGlyphs" stroke="#8e8e8e" stroke-width="0.3">オニオンスキン</text>
<text x="629.5" y="753.9" font-size="12.5" fill="#e6e6e6" textLength="79.5" lengthAdjust="spacingAndGlyphs" stroke="#e6e6e6" stroke-width="0.3">相対キーフレーム</text>
<text x="768" y="753.9" font-size="12.5" fill="#e6e6e6" textLength="88" lengthAdjust="spacingAndGlyphs" stroke="#e6e6e6" stroke-width="0.3">キーを自動フリーズ</text>
<text x="110.9" y="774.5" font-size="11.5" fill="#efe6cc" textLength="6.2" lengthAdjust="spacingAndGlyphs" stroke="#efe6cc" stroke-width="0.32">3</text>
<text x="161.6" y="774.5" font-size="11.5" fill="#efe6cc" textLength="6.2" lengthAdjust="spacingAndGlyphs" stroke="#efe6cc" stroke-width="0.32">6</text>
<text x="212.3" y="774.5" font-size="11.5" fill="#efe6cc" textLength="6.2" lengthAdjust="spacingAndGlyphs" stroke="#efe6cc" stroke-width="0.32">9</text>
<text x="259.9" y="774.5" font-size="11.5" fill="#efe6cc" textLength="12.4" lengthAdjust="spacingAndGlyphs" stroke="#efe6cc" stroke-width="0.32">12</text>
<text x="310.6" y="774.5" font-size="11.5" fill="#efe6cc" textLength="12.4" lengthAdjust="spacingAndGlyphs" stroke="#efe6cc" stroke-width="0.32">15</text>
<text x="361.3" y="774.5" font-size="11.5" fill="#efe6cc" textLength="12.4" lengthAdjust="spacingAndGlyphs" stroke="#efe6cc" stroke-width="0.32">18</text>
<text x="412.0" y="774.5" font-size="11.5" fill="#efe6cc" textLength="12.4" lengthAdjust="spacingAndGlyphs" stroke="#efe6cc" stroke-width="0.32">21</text>
<text x="462.7" y="774.5" font-size="11.5" fill="#efe6cc" textLength="12.4" lengthAdjust="spacingAndGlyphs" stroke="#efe6cc" stroke-width="0.32">24</text>
<text x="513.4" y="774.5" font-size="11.5" fill="#efe6cc" textLength="12.4" lengthAdjust="spacingAndGlyphs" stroke="#efe6cc" stroke-width="0.32">27</text>
<text x="564.1" y="774.5" font-size="11.5" fill="#efe6cc" textLength="12.4" lengthAdjust="spacingAndGlyphs" stroke="#efe6cc" stroke-width="0.32">30</text>
<text x="614.8" y="774.5" font-size="11.5" fill="#efe6cc" textLength="12.4" lengthAdjust="spacingAndGlyphs" stroke="#efe6cc" stroke-width="0.32">33</text>
<text x="665.5" y="774.5" font-size="11.5" fill="#efe6cc" textLength="12.4" lengthAdjust="spacingAndGlyphs" stroke="#efe6cc" stroke-width="0.32">36</text>
<text x="716.2" y="774.5" font-size="11.5" fill="#efe6cc" textLength="12.4" lengthAdjust="spacingAndGlyphs" stroke="#efe6cc" stroke-width="0.32">39</text>
<text x="766.9" y="774.5" font-size="11.5" fill="#efe6cc" textLength="12.4" lengthAdjust="spacingAndGlyphs" stroke="#efe6cc" stroke-width="0.32">42</text>
<text x="817.6" y="774.5" font-size="11.5" fill="#efe6cc" textLength="12.4" lengthAdjust="spacingAndGlyphs" stroke="#efe6cc" stroke-width="0.32">45</text>
<text x="868.3" y="774.5" font-size="11.5" fill="#efe6cc" textLength="12.4" lengthAdjust="spacingAndGlyphs" stroke="#efe6cc" stroke-width="0.32">48</text>
<text x="919.0" y="774.5" font-size="11.5" fill="#efe6cc" textLength="12.4" lengthAdjust="spacingAndGlyphs" stroke="#efe6cc" stroke-width="0.32">51</text>
<text x="969.7" y="774.5" font-size="11.5" fill="#efe6cc" textLength="12.4" lengthAdjust="spacingAndGlyphs" stroke="#efe6cc" stroke-width="0.32">54</text>
<text x="1020.4" y="774.5" font-size="11.5" fill="#efe6cc" textLength="12.4" lengthAdjust="spacingAndGlyphs" stroke="#efe6cc" stroke-width="0.32">57</text>
<text x="1071.1" y="774.5" font-size="11.5" fill="#efe6cc" textLength="12.4" lengthAdjust="spacingAndGlyphs" stroke="#efe6cc" stroke-width="0.32">60</text>
<text x="1121.8" y="774.5" font-size="11.5" fill="#efe6cc" textLength="12.4" lengthAdjust="spacingAndGlyphs" stroke="#efe6cc" stroke-width="0.32">63</text>
<text x="1172.5" y="774.5" font-size="11.5" fill="#efe6cc" textLength="12.4" lengthAdjust="spacingAndGlyphs" stroke="#efe6cc" stroke-width="0.32">66</text>
<text x="1223.2" y="774.5" font-size="11.5" fill="#efe6cc" textLength="12.4" lengthAdjust="spacingAndGlyphs" stroke="#efe6cc" stroke-width="0.32">69</text>
<text x="1273.9" y="774.5" font-size="11.5" fill="#efe6cc" textLength="12.4" lengthAdjust="spacingAndGlyphs" stroke="#efe6cc" stroke-width="0.32">72</text>
<text x="1324.6" y="774.5" font-size="11.5" fill="#efe6cc" textLength="12.4" lengthAdjust="spacingAndGlyphs" stroke="#efe6cc" stroke-width="0.32">75</text>
<text x="1375.3" y="774.5" font-size="11.5" fill="#efe6cc" textLength="12.4" lengthAdjust="spacingAndGlyphs" stroke="#efe6cc" stroke-width="0.32">78</text>
<text x="60" y="773.7" font-size="11.5" fill="#cf9a3c" textLength="6.5" lengthAdjust="spacingAndGlyphs" stroke="#cf9a3c" stroke-width="0.4">0</text>
<text x="466.3" y="810.3" font-size="11.5" fill="#9e9e9e" textLength="5.8" lengthAdjust="spacingAndGlyphs" stroke="#9e9e9e" stroke-width="0.3">1</text>
<text x="871.9" y="810.3" font-size="11.5" fill="#9e9e9e" textLength="5.8" lengthAdjust="spacingAndGlyphs" stroke="#9e9e9e" stroke-width="0.3">2</text>
<text x="1277.5" y="810.3" font-size="11.5" fill="#9e9e9e" textLength="5.8" lengthAdjust="spacingAndGlyphs" stroke="#9e9e9e" stroke-width="0.3">3</text>
<text x="60.3" y="810.3" font-size="11.5" fill="#8a8a8a" textLength="5.7" lengthAdjust="spacingAndGlyphs" stroke="#8a8a8a" stroke-width="0.3">0</text>
<text x="1527" y="152.1" font-size="12.5" fill="#e6e6e6" textLength="39" lengthAdjust="spacingAndGlyphs" stroke="#e6e6e6" stroke-width="0.3">スタイル</text>
<text x="1444" y="182.1" font-size="12.5" fill="#8d8d8d" textLength="49" lengthAdjust="spacingAndGlyphs" stroke="#8d8d8d" stroke-width="0.3">塗りつぶし</text>
<text x="1444" y="209.1" font-size="12.5" fill="#8d8d8d" textLength="44" lengthAdjust="spacingAndGlyphs" stroke="#8d8d8d" stroke-width="0.3">ストローク</text>
<text x="1599" y="216.1" font-size="12.5" fill="#555" textLength="28" lengthAdjust="spacingAndGlyphs" stroke="#555" stroke-width="0.3">ブラシ</text>
<text x="1604" y="232.1" font-size="12.5" fill="#555" textLength="18" lengthAdjust="spacingAndGlyphs" stroke="#555" stroke-width="0.3">なし</text>
<text x="1425" y="236.6" font-size="12.5" fill="#e6e6e6" textLength="11.5" lengthAdjust="spacingAndGlyphs" stroke="#e6e6e6" stroke-width="0.3">幅</text>
<text x="1509" y="236.5" font-size="10.5" fill="#5a6878" textLength="6" lengthAdjust="spacingAndGlyphs" stroke="#5a6878" stroke-width="0.1">4</text>
<text x="1425" y="264.6" font-size="12.5" fill="#e6e6e6" textLength="42.5" lengthAdjust="spacingAndGlyphs" stroke="#e6e6e6" stroke-width="0.3">エフェクト</text>
<text x="1507.5" y="264.1" font-size="12.5" fill="#e6e6e6" textLength="41.0" lengthAdjust="spacingAndGlyphs" stroke="#e6e6e6" stroke-width="0.3">&lt;未設...</text>
<text x="1598.5" y="264.9" font-size="12" fill="#8a8a8a" textLength="10.0" lengthAdjust="spacingAndGlyphs" stroke="#8a8a8a" stroke-width="0.3">...</text>
<text x="1425" y="298.6" font-size="12.5" fill="#e6e6e6" textLength="36" lengthAdjust="spacingAndGlyphs" stroke="#e6e6e6" stroke-width="0.3">色見本</text>
<text x="1490.5" y="298.1" font-size="12.5" fill="#e6e6e6" textLength="92.0" lengthAdjust="spacingAndGlyphs" stroke="#e6e6e6" stroke-width="0.3">Basic Colors.png</text>
<text x="1450" y="447.1" font-size="12.5" fill="#e6e6e6" textLength="26" lengthAdjust="spacingAndGlyphs" stroke="#e6e6e6" stroke-width="0.3">コピー</text>
<text x="1508" y="447.1" font-size="12.5" fill="#858585" textLength="37.5" lengthAdjust="spacingAndGlyphs" stroke="#858585" stroke-width="0.3">ペースト</text>
<text x="1576" y="447.1" font-size="12.5" fill="#e6e6e6" textLength="36.5" lengthAdjust="spacingAndGlyphs" stroke="#e6e6e6" stroke-width="0.3">リセット</text>
<text x="1444" y="474.6" font-size="12.5" fill="#e6e6e6" textLength="24" lengthAdjust="spacingAndGlyphs" stroke="#e6e6e6" stroke-width="0.3">高度</text>
<text x="1500" y="474.6" font-size="12.5" fill="#e6e6e6" textLength="68" lengthAdjust="spacingAndGlyphs" stroke="#e6e6e6" stroke-width="0.3">チェッカー選択</text>
<text x="1527" y="504.1" font-size="12.5" fill="#e6e6e6" textLength="39" lengthAdjust="spacingAndGlyphs" stroke="#e6e6e6" stroke-width="0.3">レイヤー</text>
<text x="1450" y="547.6" font-size="12.5" fill="#e6e6e6" textLength="34" lengthAdjust="spacingAndGlyphs" stroke="#e6e6e6" stroke-width="0.3">名前...</text>
<text x="1481.5" y="575.4" font-size="12.5" fill="#e6e6e6" textLength="24.0" lengthAdjust="spacingAndGlyphs" stroke="#e6e6e6" stroke-width="0.3">名前</text>
<text x="1525" y="600.1" font-size="12.5" fill="#5a4612" textLength="12" lengthAdjust="spacingAndGlyphs" stroke="#5a4612" stroke-width="0.3">腕</text>
<text x="1540" y="623.4" font-size="12.5" fill="#e6e6e6" textLength="24" lengthAdjust="spacingAndGlyphs" stroke="#e6e6e6" stroke-width="0.3">Arm</text>
<text x="1524.5" y="646.6" font-size="12.5" fill="#e6e6e6" textLength="38.5" lengthAdjust="spacingAndGlyphs" stroke="#e6e6e6" stroke-width="0.3">Layer 1</text>
</svg>
</body>
</html>
